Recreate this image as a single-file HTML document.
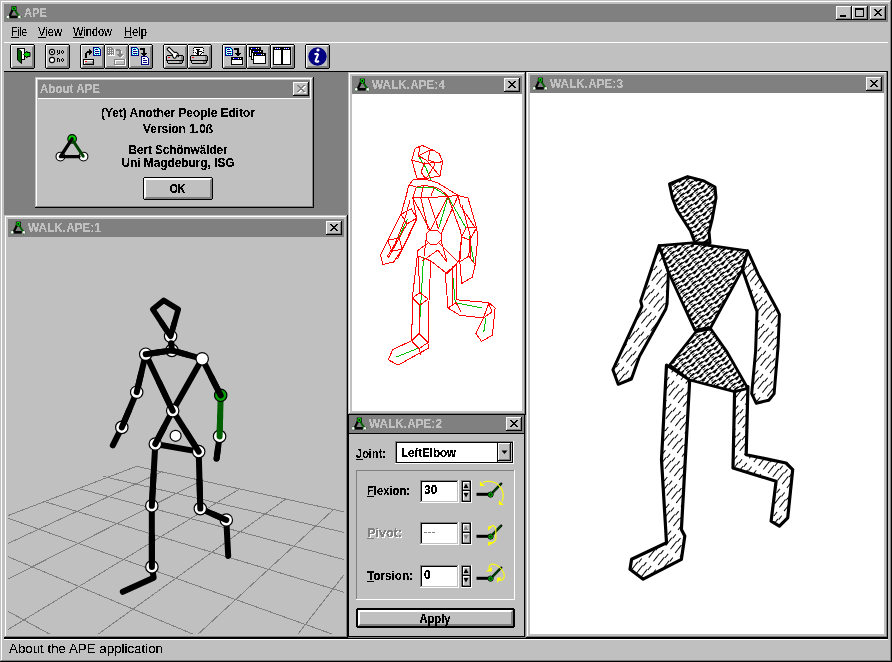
<!DOCTYPE html>
<html><head><meta charset="utf-8"><style>
html,body{margin:0;padding:0;width:892px;height:662px;overflow:hidden;background:#c0c0c0}
svg{display:block}
</style></head><body>
<svg width="892" height="662" viewBox="0 0 892 662" shape-rendering="crispEdges">
<defs><filter id="crisp" x="-5%" y="-20%" width="110%" height="140%" color-interpolation-filters="sRGB"><feComponentTransfer><feFuncA type="discrete" tableValues="0 0 1 1 1"/></feComponentTransfer></filter><filter id="crisp2" x="-5%" y="-20%" width="110%" height="140%"><feComponentTransfer><feFuncA type="discrete" tableValues="0 0 0 1 1 1 1"/></feComponentTransfer></filter></defs>
<rect x="0" y="0" width="892" height="662" fill="#c0c0c0"/>
<rect x="1" y="1" width="889" height="1" fill="#ffffff"/>
<rect x="1" y="1" width="1" height="659" fill="#ffffff"/>
<rect x="1" y="660" width="890" height="1" fill="#808080"/>
<rect x="890" y="1" width="1" height="660" fill="#808080"/>
<rect x="0" y="661" width="892" height="1" fill="#000000"/>
<rect x="891" y="0" width="1" height="662" fill="#000000"/>
<rect x="4" y="4" width="884" height="18" fill="#808080"/>
<g transform="translate(5.7,5.6) scale(1.0)" shape-rendering="auto"><path d="M7.4 3.2 L3.6 11.2" stroke="#000" stroke-width="2.2" fill="none"/><rect x="3.2" y="10" width="8.6" height="2.6" fill="#000"/><path d="M8.6 3.6 L13.6 11.2" stroke="#006000" stroke-width="1.9" fill="none"/><rect x="5.8" y="0.6" width="5" height="4.6" fill="#000"/><circle cx="8.3" cy="2.9" r="1.5" fill="none" stroke="#00d000" stroke-width="1.2"/><circle cx="2.2" cy="11.3" r="1.6" fill="#fff" stroke="#004000" stroke-width="0.8" stroke-dasharray="1 1"/><circle cx="13.8" cy="11.3" r="1.6" fill="#fff" stroke="#004000" stroke-width="0.8" stroke-dasharray="1 1"/></g>
<text x="24" y="16.5" font-size="12" fill="#c0c0c0" font-family="Liberation Sans" font-weight="bold" textLength="23" lengthAdjust="spacingAndGlyphs" filter="url(#crisp)">APE</text>
<rect x="836" y="6" width="16" height="14" fill="#c0c0c0"/>
<rect x="836" y="6" width="15" height="1" fill="#ffffff"/>
<rect x="836" y="6" width="1" height="13" fill="#ffffff"/>
<rect x="836" y="19" width="16" height="1" fill="#000000"/>
<rect x="851" y="6" width="1" height="14" fill="#000000"/>
<rect x="837" y="18" width="14" height="1" fill="#808080"/>
<rect x="850" y="7" width="1" height="12" fill="#808080"/>
<rect x="852" y="6" width="16" height="14" fill="#c0c0c0"/>
<rect x="852" y="6" width="15" height="1" fill="#ffffff"/>
<rect x="852" y="6" width="1" height="13" fill="#ffffff"/>
<rect x="852" y="19" width="16" height="1" fill="#000000"/>
<rect x="867" y="6" width="1" height="14" fill="#000000"/>
<rect x="853" y="18" width="14" height="1" fill="#808080"/>
<rect x="866" y="7" width="1" height="12" fill="#808080"/>
<rect x="870" y="6" width="16" height="14" fill="#c0c0c0"/>
<rect x="870" y="6" width="15" height="1" fill="#ffffff"/>
<rect x="870" y="6" width="1" height="13" fill="#ffffff"/>
<rect x="870" y="19" width="16" height="1" fill="#000000"/>
<rect x="885" y="6" width="1" height="14" fill="#000000"/>
<rect x="871" y="18" width="14" height="1" fill="#808080"/>
<rect x="884" y="7" width="1" height="12" fill="#808080"/>
<rect x="840" y="15" width="6" height="2" fill="#000000"/>
<rect x="855" y="8" width="9" height="9" fill="#000000"/>
<rect x="856" y="10" width="7" height="6" fill="#c0c0c0"/>
<rect x="870" y="6" width="16" height="14" fill="#c0c0c0"/>
<rect x="870" y="6" width="15" height="1" fill="#ffffff"/>
<rect x="870" y="6" width="1" height="13" fill="#ffffff"/>
<rect x="870" y="19" width="16" height="1" fill="#000000"/>
<rect x="885" y="6" width="1" height="14" fill="#000000"/>
<rect x="871" y="18" width="14" height="1" fill="#808080"/>
<rect x="884" y="7" width="1" height="12" fill="#808080"/>
<rect x="874" y="9" width="1" height="1" fill="#000000"/>
<rect x="875" y="9" width="1" height="1" fill="#000000"/>
<rect x="880" y="9" width="1" height="1" fill="#000000"/>
<rect x="881" y="9" width="1" height="1" fill="#000000"/>
<rect x="875" y="10" width="1" height="1" fill="#000000"/>
<rect x="876" y="10" width="1" height="1" fill="#000000"/>
<rect x="879" y="10" width="1" height="1" fill="#000000"/>
<rect x="880" y="10" width="1" height="1" fill="#000000"/>
<rect x="876" y="11" width="1" height="1" fill="#000000"/>
<rect x="877" y="11" width="1" height="1" fill="#000000"/>
<rect x="878" y="11" width="1" height="1" fill="#000000"/>
<rect x="879" y="11" width="1" height="1" fill="#000000"/>
<rect x="877" y="12" width="1" height="1" fill="#000000"/>
<rect x="878" y="12" width="1" height="1" fill="#000000"/>
<rect x="876" y="13" width="1" height="1" fill="#000000"/>
<rect x="877" y="13" width="1" height="1" fill="#000000"/>
<rect x="878" y="13" width="1" height="1" fill="#000000"/>
<rect x="879" y="13" width="1" height="1" fill="#000000"/>
<rect x="875" y="14" width="1" height="1" fill="#000000"/>
<rect x="876" y="14" width="1" height="1" fill="#000000"/>
<rect x="879" y="14" width="1" height="1" fill="#000000"/>
<rect x="880" y="14" width="1" height="1" fill="#000000"/>
<rect x="874" y="15" width="1" height="1" fill="#000000"/>
<rect x="875" y="15" width="1" height="1" fill="#000000"/>
<rect x="880" y="15" width="1" height="1" fill="#000000"/>
<rect x="881" y="15" width="1" height="1" fill="#000000"/>
<text x="11" y="35.5" font-size="12" fill="#000000" font-family="Liberation Sans" textLength="16" lengthAdjust="spacingAndGlyphs" filter="url(#crisp2)">File</text>
<rect x="11" y="37" width="8" height="1" fill="#000000"/>
<text x="38" y="35.5" font-size="12" fill="#000000" font-family="Liberation Sans" textLength="24" lengthAdjust="spacingAndGlyphs" filter="url(#crisp2)">View</text>
<rect x="38" y="37" width="8" height="1" fill="#000000"/>
<text x="73" y="35.5" font-size="12" fill="#000000" font-family="Liberation Sans" textLength="39" lengthAdjust="spacingAndGlyphs" filter="url(#crisp2)">Window</text>
<rect x="73" y="37" width="11" height="1" fill="#000000"/>
<text x="124" y="35.5" font-size="12" fill="#000000" font-family="Liberation Sans" textLength="23" lengthAdjust="spacingAndGlyphs" filter="url(#crisp2)">Help</text>
<rect x="124" y="37" width="8" height="1" fill="#000000"/>
<rect x="4" y="42" width="884" height="1" fill="#ffffff"/>
<rect x="10" y="44" width="25" height="25" fill="#c0c0c0"/>
<rect x="11" y="44" width="23" height="1" fill="#000000"/>
<rect x="11" y="68" width="23" height="1" fill="#000000"/>
<rect x="10" y="45" width="1" height="23" fill="#000000"/>
<rect x="34" y="45" width="1" height="23" fill="#000000"/>
<rect x="11" y="45" width="22" height="1" fill="#ffffff"/>
<rect x="11" y="45" width="1" height="22" fill="#ffffff"/>
<rect x="12" y="67" width="22" height="1" fill="#808080"/>
<rect x="13" y="66" width="21" height="1" fill="#808080"/>
<rect x="33" y="46" width="1" height="22" fill="#808080"/>
<rect x="32" y="47" width="1" height="21" fill="#808080"/>
<rect x="45" y="44" width="25" height="25" fill="#c0c0c0"/>
<rect x="46" y="44" width="23" height="1" fill="#000000"/>
<rect x="46" y="68" width="23" height="1" fill="#000000"/>
<rect x="45" y="45" width="1" height="23" fill="#000000"/>
<rect x="69" y="45" width="1" height="23" fill="#000000"/>
<rect x="46" y="45" width="22" height="1" fill="#ffffff"/>
<rect x="46" y="45" width="1" height="22" fill="#ffffff"/>
<rect x="47" y="67" width="22" height="1" fill="#808080"/>
<rect x="48" y="66" width="21" height="1" fill="#808080"/>
<rect x="68" y="46" width="1" height="22" fill="#808080"/>
<rect x="67" y="47" width="1" height="21" fill="#808080"/>
<rect x="80" y="44" width="25" height="25" fill="#c0c0c0"/>
<rect x="81" y="44" width="23" height="1" fill="#000000"/>
<rect x="81" y="68" width="23" height="1" fill="#000000"/>
<rect x="80" y="45" width="1" height="23" fill="#000000"/>
<rect x="104" y="45" width="1" height="23" fill="#000000"/>
<rect x="81" y="45" width="22" height="1" fill="#ffffff"/>
<rect x="81" y="45" width="1" height="22" fill="#ffffff"/>
<rect x="82" y="67" width="22" height="1" fill="#808080"/>
<rect x="83" y="66" width="21" height="1" fill="#808080"/>
<rect x="103" y="46" width="1" height="22" fill="#808080"/>
<rect x="102" y="47" width="1" height="21" fill="#808080"/>
<rect x="104" y="44" width="25" height="25" fill="#c0c0c0"/>
<rect x="105" y="44" width="23" height="1" fill="#000000"/>
<rect x="105" y="68" width="23" height="1" fill="#000000"/>
<rect x="104" y="45" width="1" height="23" fill="#000000"/>
<rect x="128" y="45" width="1" height="23" fill="#000000"/>
<rect x="105" y="45" width="22" height="1" fill="#ffffff"/>
<rect x="105" y="45" width="1" height="22" fill="#ffffff"/>
<rect x="106" y="67" width="22" height="1" fill="#808080"/>
<rect x="107" y="66" width="21" height="1" fill="#808080"/>
<rect x="127" y="46" width="1" height="22" fill="#808080"/>
<rect x="126" y="47" width="1" height="21" fill="#808080"/>
<rect x="128" y="44" width="25" height="25" fill="#c0c0c0"/>
<rect x="129" y="44" width="23" height="1" fill="#000000"/>
<rect x="129" y="68" width="23" height="1" fill="#000000"/>
<rect x="128" y="45" width="1" height="23" fill="#000000"/>
<rect x="152" y="45" width="1" height="23" fill="#000000"/>
<rect x="129" y="45" width="22" height="1" fill="#ffffff"/>
<rect x="129" y="45" width="1" height="22" fill="#ffffff"/>
<rect x="130" y="67" width="22" height="1" fill="#808080"/>
<rect x="131" y="66" width="21" height="1" fill="#808080"/>
<rect x="151" y="46" width="1" height="22" fill="#808080"/>
<rect x="150" y="47" width="1" height="21" fill="#808080"/>
<rect x="163" y="44" width="25" height="25" fill="#c0c0c0"/>
<rect x="164" y="44" width="23" height="1" fill="#000000"/>
<rect x="164" y="68" width="23" height="1" fill="#000000"/>
<rect x="163" y="45" width="1" height="23" fill="#000000"/>
<rect x="187" y="45" width="1" height="23" fill="#000000"/>
<rect x="164" y="45" width="22" height="1" fill="#ffffff"/>
<rect x="164" y="45" width="1" height="22" fill="#ffffff"/>
<rect x="165" y="67" width="22" height="1" fill="#808080"/>
<rect x="166" y="66" width="21" height="1" fill="#808080"/>
<rect x="186" y="46" width="1" height="22" fill="#808080"/>
<rect x="185" y="47" width="1" height="21" fill="#808080"/>
<rect x="187" y="44" width="25" height="25" fill="#c0c0c0"/>
<rect x="188" y="44" width="23" height="1" fill="#000000"/>
<rect x="188" y="68" width="23" height="1" fill="#000000"/>
<rect x="187" y="45" width="1" height="23" fill="#000000"/>
<rect x="211" y="45" width="1" height="23" fill="#000000"/>
<rect x="188" y="45" width="22" height="1" fill="#ffffff"/>
<rect x="188" y="45" width="1" height="22" fill="#ffffff"/>
<rect x="189" y="67" width="22" height="1" fill="#808080"/>
<rect x="190" y="66" width="21" height="1" fill="#808080"/>
<rect x="210" y="46" width="1" height="22" fill="#808080"/>
<rect x="209" y="47" width="1" height="21" fill="#808080"/>
<rect x="222" y="44" width="25" height="25" fill="#c0c0c0"/>
<rect x="223" y="44" width="23" height="1" fill="#000000"/>
<rect x="223" y="68" width="23" height="1" fill="#000000"/>
<rect x="222" y="45" width="1" height="23" fill="#000000"/>
<rect x="246" y="45" width="1" height="23" fill="#000000"/>
<rect x="223" y="45" width="22" height="1" fill="#ffffff"/>
<rect x="223" y="45" width="1" height="22" fill="#ffffff"/>
<rect x="224" y="67" width="22" height="1" fill="#808080"/>
<rect x="225" y="66" width="21" height="1" fill="#808080"/>
<rect x="245" y="46" width="1" height="22" fill="#808080"/>
<rect x="244" y="47" width="1" height="21" fill="#808080"/>
<rect x="246" y="44" width="25" height="25" fill="#c0c0c0"/>
<rect x="247" y="44" width="23" height="1" fill="#000000"/>
<rect x="247" y="68" width="23" height="1" fill="#000000"/>
<rect x="246" y="45" width="1" height="23" fill="#000000"/>
<rect x="270" y="45" width="1" height="23" fill="#000000"/>
<rect x="247" y="45" width="22" height="1" fill="#ffffff"/>
<rect x="247" y="45" width="1" height="22" fill="#ffffff"/>
<rect x="248" y="67" width="22" height="1" fill="#808080"/>
<rect x="249" y="66" width="21" height="1" fill="#808080"/>
<rect x="269" y="46" width="1" height="22" fill="#808080"/>
<rect x="268" y="47" width="1" height="21" fill="#808080"/>
<rect x="270" y="44" width="25" height="25" fill="#c0c0c0"/>
<rect x="271" y="44" width="23" height="1" fill="#000000"/>
<rect x="271" y="68" width="23" height="1" fill="#000000"/>
<rect x="270" y="45" width="1" height="23" fill="#000000"/>
<rect x="294" y="45" width="1" height="23" fill="#000000"/>
<rect x="271" y="45" width="22" height="1" fill="#ffffff"/>
<rect x="271" y="45" width="1" height="22" fill="#ffffff"/>
<rect x="272" y="67" width="22" height="1" fill="#808080"/>
<rect x="273" y="66" width="21" height="1" fill="#808080"/>
<rect x="293" y="46" width="1" height="22" fill="#808080"/>
<rect x="292" y="47" width="1" height="21" fill="#808080"/>
<rect x="305" y="44" width="25" height="25" fill="#c0c0c0"/>
<rect x="306" y="44" width="23" height="1" fill="#000000"/>
<rect x="306" y="68" width="23" height="1" fill="#000000"/>
<rect x="305" y="45" width="1" height="23" fill="#000000"/>
<rect x="329" y="45" width="1" height="23" fill="#000000"/>
<rect x="306" y="45" width="22" height="1" fill="#ffffff"/>
<rect x="306" y="45" width="1" height="22" fill="#ffffff"/>
<rect x="307" y="67" width="22" height="1" fill="#808080"/>
<rect x="308" y="66" width="21" height="1" fill="#808080"/>
<rect x="328" y="46" width="1" height="22" fill="#808080"/>
<rect x="327" y="47" width="1" height="21" fill="#808080"/>
<rect x="104" y="45" width="1" height="23" fill="#000000"/>
<rect x="128" y="45" width="1" height="23" fill="#000000"/>
<rect x="187" y="45" width="1" height="23" fill="#000000"/>
<rect x="246" y="45" width="1" height="23" fill="#000000"/>
<rect x="270" y="45" width="1" height="23" fill="#000000"/>
<g transform="translate(10,44)" shape-rendering="crispEdges"><rect x="7" y="4" width="8" height="12" fill="#000"/><rect x="8" y="5" width="6" height="10" fill="#fff"/></g>
<g transform="translate(10,44)" shape-rendering="auto"><polygon points="7.5,4.5 11.5,7.5 11.5,19.5 7.5,16" fill="#006000" stroke="#000" stroke-width="1"/><polygon points="13.5,10.5 17,7 17,8.5 20,8.5 20,12.5 17,12.5 17,14" fill="#00d000" stroke="#000" stroke-width="1"/></g>
<g transform="translate(45,44)" shape-rendering="auto"><circle cx="7" cy="8" r="2.6" fill="#fff" stroke="#000" stroke-width="1.1"/><circle cx="7" cy="8" r="1.1" fill="#000"/><circle cx="7" cy="16" r="2.6" fill="#fff" stroke="#000" stroke-width="1.1"/></g>
<rect x="57" y="50" width="1" height="3" fill="#000000"/>
<rect x="59" y="50" width="1" height="4" fill="#000000"/>
<rect x="58" y="53" width="1" height="1" fill="#000000"/>
<rect x="57" y="54" width="1" height="1" fill="#000000"/>
<rect x="62" y="50" width="1" height="1" fill="#000000"/>
<rect x="61" y="51" width="1" height="2" fill="#000000"/>
<rect x="63" y="51" width="1" height="2" fill="#000000"/>
<rect x="62" y="53" width="1" height="1" fill="#000000"/>
<rect x="57" y="58" width="2" height="1" fill="#000000"/>
<rect x="57" y="58" width="1" height="4" fill="#000000"/>
<rect x="59" y="59" width="1" height="3" fill="#000000"/>
<rect x="62" y="58" width="1" height="1" fill="#000000"/>
<rect x="61" y="59" width="1" height="2" fill="#000000"/>
<rect x="63" y="59" width="1" height="2" fill="#000000"/>
<rect x="62" y="61" width="1" height="1" fill="#000000"/>
<rect x="93" y="47" width="1" height="1" fill="#000080"/>
<rect x="94" y="47" width="1" height="1" fill="#000080"/>
<rect x="95" y="47" width="1" height="1" fill="#000080"/>
<rect x="96" y="47" width="1" height="1" fill="#000080"/>
<rect x="97" y="47" width="1" height="1" fill="#000080"/>
<rect x="98" y="47" width="1" height="1" fill="#000080"/>
<rect x="93" y="48" width="1" height="1" fill="#000080"/>
<rect x="94" y="48" width="1" height="1" fill="#00ffff"/>
<rect x="95" y="48" width="1" height="1" fill="#ffffff"/>
<rect x="96" y="48" width="1" height="1" fill="#00ffff"/>
<rect x="97" y="48" width="1" height="1" fill="#ffffff"/>
<rect x="98" y="48" width="1" height="1" fill="#00ffff"/>
<rect x="99" y="48" width="1" height="1" fill="#000080"/>
<rect x="93" y="49" width="1" height="1" fill="#000080"/>
<rect x="94" y="49" width="1" height="1" fill="#ffffff"/>
<rect x="95" y="49" width="1" height="1" fill="#ffffff"/>
<rect x="96" y="49" width="1" height="1" fill="#ffffff"/>
<rect x="97" y="49" width="1" height="1" fill="#ffffff"/>
<rect x="98" y="49" width="1" height="1" fill="#ffffff"/>
<rect x="99" y="49" width="1" height="1" fill="#00ffff"/>
<rect x="100" y="49" width="1" height="1" fill="#000080"/>
<rect x="93" y="50" width="1" height="1" fill="#000080"/>
<rect x="94" y="50" width="1" height="1" fill="#00ffff"/>
<rect x="95" y="50" width="1" height="1" fill="#ffffff"/>
<rect x="96" y="50" width="1" height="1" fill="#ffffff"/>
<rect x="97" y="50" width="1" height="1" fill="#ffffff"/>
<rect x="98" y="50" width="1" height="1" fill="#ffffff"/>
<rect x="99" y="50" width="1" height="1" fill="#ffffff"/>
<rect x="100" y="50" width="1" height="1" fill="#000080"/>
<rect x="93" y="51" width="1" height="1" fill="#000080"/>
<rect x="94" y="51" width="1" height="1" fill="#ffffff"/>
<rect x="95" y="51" width="1" height="1" fill="#ffffff"/>
<rect x="96" y="51" width="1" height="1" fill="#ffffff"/>
<rect x="97" y="51" width="1" height="1" fill="#ffffff"/>
<rect x="98" y="51" width="1" height="1" fill="#ffffff"/>
<rect x="99" y="51" width="1" height="1" fill="#00ffff"/>
<rect x="100" y="51" width="1" height="1" fill="#000080"/>
<rect x="93" y="52" width="1" height="1" fill="#000080"/>
<rect x="94" y="52" width="1" height="1" fill="#00ffff"/>
<rect x="95" y="52" width="1" height="1" fill="#ffffff"/>
<rect x="96" y="52" width="1" height="1" fill="#ffffff"/>
<rect x="97" y="52" width="1" height="1" fill="#ffffff"/>
<rect x="98" y="52" width="1" height="1" fill="#ffffff"/>
<rect x="99" y="52" width="1" height="1" fill="#ffffff"/>
<rect x="100" y="52" width="1" height="1" fill="#000080"/>
<rect x="93" y="53" width="1" height="1" fill="#000080"/>
<rect x="94" y="53" width="1" height="1" fill="#ffffff"/>
<rect x="95" y="53" width="1" height="1" fill="#ffffff"/>
<rect x="96" y="53" width="1" height="1" fill="#ffffff"/>
<rect x="97" y="53" width="1" height="1" fill="#ffffff"/>
<rect x="98" y="53" width="1" height="1" fill="#ffffff"/>
<rect x="99" y="53" width="1" height="1" fill="#00ffff"/>
<rect x="100" y="53" width="1" height="1" fill="#000080"/>
<rect x="93" y="54" width="1" height="1" fill="#000080"/>
<rect x="94" y="54" width="1" height="1" fill="#00ffff"/>
<rect x="95" y="54" width="1" height="1" fill="#ffffff"/>
<rect x="96" y="54" width="1" height="1" fill="#00ffff"/>
<rect x="97" y="54" width="1" height="1" fill="#ffffff"/>
<rect x="98" y="54" width="1" height="1" fill="#00ffff"/>
<rect x="99" y="54" width="1" height="1" fill="#ffffff"/>
<rect x="100" y="54" width="1" height="1" fill="#000080"/>
<rect x="93" y="55" width="1" height="1" fill="#000080"/>
<rect x="94" y="55" width="1" height="1" fill="#000080"/>
<rect x="95" y="55" width="1" height="1" fill="#000080"/>
<rect x="96" y="55" width="1" height="1" fill="#000080"/>
<rect x="97" y="55" width="1" height="1" fill="#000080"/>
<rect x="98" y="55" width="1" height="1" fill="#000080"/>
<rect x="99" y="55" width="1" height="1" fill="#000080"/>
<rect x="100" y="55" width="1" height="1" fill="#000080"/>
<rect x="95" y="49" width="3" height="1" fill="#000080"/>
<rect x="95" y="51" width="4" height="1" fill="#000080"/>
<rect x="95" y="53" width="4" height="1" fill="#000080"/>
<rect x="85" y="53" width="2" height="5" fill="#000000"/>
<rect x="86" y="52" width="1" height="1" fill="#000000"/>
<rect x="87" y="51" width="3" height="2" fill="#000000"/>
<rect x="86" y="53" width="1" height="1" fill="#000000"/>
<rect x="89" y="49" width="1" height="6" fill="#000000"/>
<rect x="90" y="50" width="1" height="4" fill="#000000"/>
<rect x="91" y="51" width="1" height="2" fill="#000000"/>
<rect x="83" y="59" width="11" height="6" fill="#000000"/>
<rect x="84" y="60" width="9" height="4" fill="#c0c0c0"/>
<rect x="84" y="60" width="9" height="1" fill="#ffffff"/>
<rect x="84" y="60" width="1" height="4" fill="#ffffff"/>
<rect x="85" y="63" width="8" height="1" fill="#808080"/>
<rect x="92" y="61" width="1" height="3" fill="#808080"/>
<rect x="85" y="61" width="2" height="1" fill="#ff0000"/>
<rect x="107" y="47" width="1" height="1" fill="#808080"/>
<rect x="108" y="47" width="1" height="1" fill="#808080"/>
<rect x="109" y="47" width="1" height="1" fill="#808080"/>
<rect x="110" y="47" width="1" height="1" fill="#808080"/>
<rect x="111" y="47" width="1" height="1" fill="#808080"/>
<rect x="107" y="48" width="1" height="1" fill="#808080"/>
<rect x="108" y="48" width="1" height="1" fill="#808080"/>
<rect x="109" y="48" width="1" height="1" fill="#808080"/>
<rect x="110" y="48" width="1" height="1" fill="#808080"/>
<rect x="111" y="48" width="1" height="1" fill="#808080"/>
<rect x="112" y="48" width="1" height="1" fill="#808080"/>
<rect x="107" y="49" width="1" height="1" fill="#808080"/>
<rect x="108" y="49" width="1" height="1" fill="#808080"/>
<rect x="109" y="49" width="1" height="1" fill="#808080"/>
<rect x="110" y="49" width="1" height="1" fill="#808080"/>
<rect x="111" y="49" width="1" height="1" fill="#808080"/>
<rect x="112" y="49" width="1" height="1" fill="#808080"/>
<rect x="113" y="49" width="1" height="1" fill="#808080"/>
<rect x="107" y="50" width="1" height="1" fill="#808080"/>
<rect x="108" y="50" width="1" height="1" fill="#808080"/>
<rect x="109" y="50" width="1" height="1" fill="#808080"/>
<rect x="110" y="50" width="1" height="1" fill="#808080"/>
<rect x="111" y="50" width="1" height="1" fill="#808080"/>
<rect x="112" y="50" width="1" height="1" fill="#808080"/>
<rect x="113" y="50" width="1" height="1" fill="#808080"/>
<rect x="107" y="51" width="1" height="1" fill="#808080"/>
<rect x="108" y="51" width="1" height="1" fill="#808080"/>
<rect x="109" y="51" width="1" height="1" fill="#808080"/>
<rect x="110" y="51" width="1" height="1" fill="#808080"/>
<rect x="111" y="51" width="1" height="1" fill="#808080"/>
<rect x="112" y="51" width="1" height="1" fill="#808080"/>
<rect x="113" y="51" width="1" height="1" fill="#808080"/>
<rect x="107" y="52" width="1" height="1" fill="#808080"/>
<rect x="108" y="52" width="1" height="1" fill="#808080"/>
<rect x="109" y="52" width="1" height="1" fill="#808080"/>
<rect x="110" y="52" width="1" height="1" fill="#808080"/>
<rect x="111" y="52" width="1" height="1" fill="#808080"/>
<rect x="112" y="52" width="1" height="1" fill="#808080"/>
<rect x="113" y="52" width="1" height="1" fill="#808080"/>
<rect x="107" y="53" width="1" height="1" fill="#808080"/>
<rect x="108" y="53" width="1" height="1" fill="#808080"/>
<rect x="109" y="53" width="1" height="1" fill="#808080"/>
<rect x="110" y="53" width="1" height="1" fill="#808080"/>
<rect x="111" y="53" width="1" height="1" fill="#808080"/>
<rect x="112" y="53" width="1" height="1" fill="#808080"/>
<rect x="113" y="53" width="1" height="1" fill="#808080"/>
<rect x="107" y="54" width="1" height="1" fill="#808080"/>
<rect x="108" y="54" width="1" height="1" fill="#808080"/>
<rect x="109" y="54" width="1" height="1" fill="#808080"/>
<rect x="110" y="54" width="1" height="1" fill="#808080"/>
<rect x="111" y="54" width="1" height="1" fill="#808080"/>
<rect x="112" y="54" width="1" height="1" fill="#808080"/>
<rect x="113" y="54" width="1" height="1" fill="#808080"/>
<rect x="108" y="48" width="1" height="1" fill="#ffffff"/>
<rect x="110" y="48" width="1" height="1" fill="#ffffff"/>
<rect x="108" y="50" width="1" height="1" fill="#ffffff"/>
<rect x="110" y="50" width="1" height="1" fill="#ffffff"/>
<rect x="112" y="50" width="1" height="1" fill="#ffffff"/>
<rect x="108" y="52" width="1" height="1" fill="#ffffff"/>
<rect x="110" y="52" width="1" height="1" fill="#ffffff"/>
<rect x="112" y="52" width="1" height="1" fill="#ffffff"/>
<rect x="110" y="54" width="1" height="1" fill="#ffffff"/>
<rect x="112" y="54" width="1" height="1" fill="#ffffff"/>
<rect x="108" y="55" width="7" height="1" fill="#ffffff"/>
<rect x="114" y="49" width="1" height="7" fill="#ffffff"/>
<rect x="116" y="49" width="4" height="2" fill="#808080"/>
<rect x="119" y="50" width="2" height="5" fill="#808080"/>
<rect x="117" y="54" width="6" height="1" fill="#808080"/>
<rect x="118" y="55" width="4" height="1" fill="#808080"/>
<rect x="119" y="56" width="2" height="1" fill="#808080"/>
<rect x="121" y="51" width="1" height="1" fill="#ffffff"/>
<rect x="121" y="52" width="1" height="1" fill="#ffffff"/>
<rect x="123" y="55" width="1" height="1" fill="#ffffff"/>
<rect x="122" y="56" width="1" height="1" fill="#ffffff"/>
<rect x="121" y="57" width="1" height="1" fill="#ffffff"/>
<rect x="114" y="59" width="11" height="6" fill="#808080"/>
<rect x="115" y="60" width="9" height="4" fill="#c0c0c0"/>
<rect x="115" y="60" width="9" height="1" fill="#ffffff"/>
<rect x="115" y="60" width="1" height="4" fill="#ffffff"/>
<rect x="115" y="65" width="11" height="1" fill="#ffffff"/>
<rect x="125" y="59" width="1" height="7" fill="#ffffff"/>
<rect x="131" y="47" width="1" height="1" fill="#000080"/>
<rect x="132" y="47" width="1" height="1" fill="#000080"/>
<rect x="133" y="47" width="1" height="1" fill="#000080"/>
<rect x="134" y="47" width="1" height="1" fill="#000080"/>
<rect x="135" y="47" width="1" height="1" fill="#000080"/>
<rect x="136" y="47" width="1" height="1" fill="#000080"/>
<rect x="131" y="48" width="1" height="1" fill="#000080"/>
<rect x="132" y="48" width="1" height="1" fill="#00ffff"/>
<rect x="133" y="48" width="1" height="1" fill="#ffffff"/>
<rect x="134" y="48" width="1" height="1" fill="#00ffff"/>
<rect x="135" y="48" width="1" height="1" fill="#ffffff"/>
<rect x="136" y="48" width="1" height="1" fill="#00ffff"/>
<rect x="137" y="48" width="1" height="1" fill="#000080"/>
<rect x="131" y="49" width="1" height="1" fill="#000080"/>
<rect x="132" y="49" width="1" height="1" fill="#ffffff"/>
<rect x="133" y="49" width="1" height="1" fill="#ffffff"/>
<rect x="134" y="49" width="1" height="1" fill="#ffffff"/>
<rect x="135" y="49" width="1" height="1" fill="#ffffff"/>
<rect x="136" y="49" width="1" height="1" fill="#ffffff"/>
<rect x="137" y="49" width="1" height="1" fill="#00ffff"/>
<rect x="138" y="49" width="1" height="1" fill="#000080"/>
<rect x="131" y="50" width="1" height="1" fill="#000080"/>
<rect x="132" y="50" width="1" height="1" fill="#00ffff"/>
<rect x="133" y="50" width="1" height="1" fill="#ffffff"/>
<rect x="134" y="50" width="1" height="1" fill="#ffffff"/>
<rect x="135" y="50" width="1" height="1" fill="#ffffff"/>
<rect x="136" y="50" width="1" height="1" fill="#ffffff"/>
<rect x="137" y="50" width="1" height="1" fill="#ffffff"/>
<rect x="138" y="50" width="1" height="1" fill="#000080"/>
<rect x="131" y="51" width="1" height="1" fill="#000080"/>
<rect x="132" y="51" width="1" height="1" fill="#ffffff"/>
<rect x="133" y="51" width="1" height="1" fill="#ffffff"/>
<rect x="134" y="51" width="1" height="1" fill="#ffffff"/>
<rect x="135" y="51" width="1" height="1" fill="#ffffff"/>
<rect x="136" y="51" width="1" height="1" fill="#ffffff"/>
<rect x="137" y="51" width="1" height="1" fill="#00ffff"/>
<rect x="138" y="51" width="1" height="1" fill="#000080"/>
<rect x="131" y="52" width="1" height="1" fill="#000080"/>
<rect x="132" y="52" width="1" height="1" fill="#00ffff"/>
<rect x="133" y="52" width="1" height="1" fill="#ffffff"/>
<rect x="134" y="52" width="1" height="1" fill="#ffffff"/>
<rect x="135" y="52" width="1" height="1" fill="#ffffff"/>
<rect x="136" y="52" width="1" height="1" fill="#ffffff"/>
<rect x="137" y="52" width="1" height="1" fill="#ffffff"/>
<rect x="138" y="52" width="1" height="1" fill="#000080"/>
<rect x="131" y="53" width="1" height="1" fill="#000080"/>
<rect x="132" y="53" width="1" height="1" fill="#ffffff"/>
<rect x="133" y="53" width="1" height="1" fill="#ffffff"/>
<rect x="134" y="53" width="1" height="1" fill="#ffffff"/>
<rect x="135" y="53" width="1" height="1" fill="#ffffff"/>
<rect x="136" y="53" width="1" height="1" fill="#ffffff"/>
<rect x="137" y="53" width="1" height="1" fill="#00ffff"/>
<rect x="138" y="53" width="1" height="1" fill="#000080"/>
<rect x="131" y="54" width="1" height="1" fill="#000080"/>
<rect x="132" y="54" width="1" height="1" fill="#00ffff"/>
<rect x="133" y="54" width="1" height="1" fill="#ffffff"/>
<rect x="134" y="54" width="1" height="1" fill="#00ffff"/>
<rect x="135" y="54" width="1" height="1" fill="#ffffff"/>
<rect x="136" y="54" width="1" height="1" fill="#00ffff"/>
<rect x="137" y="54" width="1" height="1" fill="#ffffff"/>
<rect x="138" y="54" width="1" height="1" fill="#000080"/>
<rect x="131" y="55" width="1" height="1" fill="#000080"/>
<rect x="132" y="55" width="1" height="1" fill="#000080"/>
<rect x="133" y="55" width="1" height="1" fill="#000080"/>
<rect x="134" y="55" width="1" height="1" fill="#000080"/>
<rect x="135" y="55" width="1" height="1" fill="#000080"/>
<rect x="136" y="55" width="1" height="1" fill="#000080"/>
<rect x="137" y="55" width="1" height="1" fill="#000080"/>
<rect x="138" y="55" width="1" height="1" fill="#000080"/>
<rect x="133" y="49" width="3" height="1" fill="#000080"/>
<rect x="133" y="51" width="4" height="1" fill="#000080"/>
<rect x="133" y="53" width="4" height="1" fill="#000080"/>
<rect x="140" y="48" width="4" height="2" fill="#000000"/>
<rect x="143" y="49" width="2" height="5" fill="#000000"/>
<rect x="144" y="48" width="1" height="1" fill="#000000"/>
<rect x="141" y="53" width="6" height="1" fill="#000000"/>
<rect x="142" y="54" width="4" height="1" fill="#000000"/>
<rect x="143" y="55" width="2" height="1" fill="#000000"/>
<rect x="141" y="56" width="1" height="1" fill="#000080"/>
<rect x="142" y="56" width="1" height="1" fill="#000080"/>
<rect x="143" y="56" width="1" height="1" fill="#000080"/>
<rect x="144" y="56" width="1" height="1" fill="#000080"/>
<rect x="145" y="56" width="1" height="1" fill="#000080"/>
<rect x="146" y="56" width="1" height="1" fill="#000080"/>
<rect x="141" y="57" width="1" height="1" fill="#000080"/>
<rect x="142" y="57" width="1" height="1" fill="#ffffff"/>
<rect x="143" y="57" width="1" height="1" fill="#ffffff"/>
<rect x="144" y="57" width="1" height="1" fill="#ffffff"/>
<rect x="145" y="57" width="1" height="1" fill="#ffffff"/>
<rect x="146" y="57" width="1" height="1" fill="#ffffff"/>
<rect x="147" y="57" width="1" height="1" fill="#000080"/>
<rect x="141" y="58" width="1" height="1" fill="#000080"/>
<rect x="142" y="58" width="1" height="1" fill="#ffffff"/>
<rect x="143" y="58" width="1" height="1" fill="#ffffff"/>
<rect x="144" y="58" width="1" height="1" fill="#ffffff"/>
<rect x="145" y="58" width="1" height="1" fill="#ffffff"/>
<rect x="146" y="58" width="1" height="1" fill="#ffffff"/>
<rect x="147" y="58" width="1" height="1" fill="#ffffff"/>
<rect x="148" y="58" width="1" height="1" fill="#000080"/>
<rect x="141" y="59" width="1" height="1" fill="#000080"/>
<rect x="142" y="59" width="1" height="1" fill="#ffffff"/>
<rect x="143" y="59" width="1" height="1" fill="#ffffff"/>
<rect x="144" y="59" width="1" height="1" fill="#ffffff"/>
<rect x="145" y="59" width="1" height="1" fill="#ffffff"/>
<rect x="146" y="59" width="1" height="1" fill="#ffffff"/>
<rect x="147" y="59" width="1" height="1" fill="#ffffff"/>
<rect x="148" y="59" width="1" height="1" fill="#000080"/>
<rect x="141" y="60" width="1" height="1" fill="#000080"/>
<rect x="142" y="60" width="1" height="1" fill="#ffffff"/>
<rect x="143" y="60" width="1" height="1" fill="#ffffff"/>
<rect x="144" y="60" width="1" height="1" fill="#ffffff"/>
<rect x="145" y="60" width="1" height="1" fill="#ffffff"/>
<rect x="146" y="60" width="1" height="1" fill="#ffffff"/>
<rect x="147" y="60" width="1" height="1" fill="#ffffff"/>
<rect x="148" y="60" width="1" height="1" fill="#000080"/>
<rect x="141" y="61" width="1" height="1" fill="#000080"/>
<rect x="142" y="61" width="1" height="1" fill="#ffffff"/>
<rect x="143" y="61" width="1" height="1" fill="#ffffff"/>
<rect x="144" y="61" width="1" height="1" fill="#ffffff"/>
<rect x="145" y="61" width="1" height="1" fill="#ffffff"/>
<rect x="146" y="61" width="1" height="1" fill="#ffffff"/>
<rect x="147" y="61" width="1" height="1" fill="#ffffff"/>
<rect x="148" y="61" width="1" height="1" fill="#000080"/>
<rect x="141" y="62" width="1" height="1" fill="#000080"/>
<rect x="142" y="62" width="1" height="1" fill="#ffffff"/>
<rect x="143" y="62" width="1" height="1" fill="#ffffff"/>
<rect x="144" y="62" width="1" height="1" fill="#ffffff"/>
<rect x="145" y="62" width="1" height="1" fill="#ffffff"/>
<rect x="146" y="62" width="1" height="1" fill="#ffffff"/>
<rect x="147" y="62" width="1" height="1" fill="#ffffff"/>
<rect x="148" y="62" width="1" height="1" fill="#000080"/>
<rect x="141" y="63" width="1" height="1" fill="#000080"/>
<rect x="142" y="63" width="1" height="1" fill="#ffffff"/>
<rect x="143" y="63" width="1" height="1" fill="#ffffff"/>
<rect x="144" y="63" width="1" height="1" fill="#ffffff"/>
<rect x="145" y="63" width="1" height="1" fill="#ffffff"/>
<rect x="146" y="63" width="1" height="1" fill="#ffffff"/>
<rect x="147" y="63" width="1" height="1" fill="#ffffff"/>
<rect x="148" y="63" width="1" height="1" fill="#000080"/>
<rect x="141" y="64" width="1" height="1" fill="#000080"/>
<rect x="142" y="64" width="1" height="1" fill="#000080"/>
<rect x="143" y="64" width="1" height="1" fill="#000080"/>
<rect x="144" y="64" width="1" height="1" fill="#000080"/>
<rect x="145" y="64" width="1" height="1" fill="#000080"/>
<rect x="146" y="64" width="1" height="1" fill="#000080"/>
<rect x="147" y="64" width="1" height="1" fill="#000080"/>
<rect x="148" y="64" width="1" height="1" fill="#000080"/>
<rect x="143" y="58" width="2" height="1" fill="#000080"/>
<rect x="143" y="60" width="4" height="1" fill="#000080"/>
<rect x="143" y="62" width="4" height="1" fill="#000080"/>
<rect x="167" y="55" width="16" height="1" fill="#000000"/>
<rect x="166" y="56" width="1" height="4" fill="#000000"/>
<rect x="183" y="56" width="1" height="4" fill="#000000"/>
<rect x="167" y="56" width="16" height="4" fill="#c0c0c0"/>
<rect x="168" y="57" width="2" height="1" fill="#ff0000"/>
<rect x="181" y="56" width="2" height="4" fill="#808080"/>
<rect x="166" y="60" width="18" height="1" fill="#000000"/>
<rect x="167" y="61" width="1" height="2" fill="#000000"/>
<rect x="182" y="61" width="1" height="2" fill="#000000"/>
<rect x="168" y="63" width="14" height="1" fill="#000000"/>
<rect x="168" y="61" width="14" height="2" fill="#c0c0c0"/>
<rect x="179" y="61" width="3" height="2" fill="#808080"/>
<g transform="translate(163,44)" shape-rendering="auto"><polygon points="4.2,4.6 6,3.2 11.3,8.4 13.6,8.4 15.2,10 15.4,12.6 14,11.2 12.6,14 11,14.2 9.8,12.6 9.4,10.6 4.2,5.6" fill="#fff" stroke="#000" stroke-width="1.1" stroke-linejoin="round"/></g>
<rect x="191" y="55" width="16" height="1" fill="#000000"/>
<rect x="190" y="56" width="1" height="4" fill="#000000"/>
<rect x="207" y="56" width="1" height="4" fill="#000000"/>
<rect x="191" y="56" width="16" height="4" fill="#c0c0c0"/>
<rect x="192" y="57" width="2" height="1" fill="#ff0000"/>
<rect x="205" y="56" width="2" height="4" fill="#808080"/>
<rect x="190" y="60" width="18" height="1" fill="#000000"/>
<rect x="191" y="61" width="1" height="2" fill="#000000"/>
<rect x="206" y="61" width="1" height="2" fill="#000000"/>
<rect x="192" y="63" width="14" height="1" fill="#000000"/>
<rect x="192" y="61" width="14" height="2" fill="#c0c0c0"/>
<rect x="203" y="61" width="3" height="2" fill="#808080"/>
<rect x="194" y="47" width="9" height="8" fill="#ffffff"/>
<rect x="194" y="47" width="9" height="1" fill="#000000"/>
<rect x="193" y="48" width="1" height="1" fill="#000000"/>
<rect x="203" y="48" width="1" height="1" fill="#000000"/>
<rect x="193" y="50" width="1" height="1" fill="#000000"/>
<rect x="203" y="50" width="1" height="1" fill="#000000"/>
<rect x="193" y="52" width="1" height="1" fill="#000000"/>
<rect x="203" y="52" width="1" height="1" fill="#000000"/>
<rect x="196" y="49" width="4" height="1" fill="#000000"/>
<rect x="197" y="49" width="2" height="6" fill="#000000"/>
<rect x="195" y="52" width="1" height="1" fill="#000000"/>
<rect x="196" y="53" width="1" height="1" fill="#000000"/>
<rect x="199" y="51" width="3" height="1" fill="#000000"/>
<rect x="202" y="52" width="1" height="1" fill="#000000"/>
<rect x="201" y="53" width="1" height="1" fill="#000000"/>
<rect x="200" y="54" width="1" height="1" fill="#000000"/>
<rect x="225" y="47" width="1" height="1" fill="#000080"/>
<rect x="226" y="47" width="1" height="1" fill="#000080"/>
<rect x="227" y="47" width="1" height="1" fill="#000080"/>
<rect x="228" y="47" width="1" height="1" fill="#000080"/>
<rect x="229" y="47" width="1" height="1" fill="#000080"/>
<rect x="230" y="47" width="1" height="1" fill="#000080"/>
<rect x="225" y="48" width="1" height="1" fill="#000080"/>
<rect x="226" y="48" width="1" height="1" fill="#00ffff"/>
<rect x="227" y="48" width="1" height="1" fill="#ffffff"/>
<rect x="228" y="48" width="1" height="1" fill="#00ffff"/>
<rect x="229" y="48" width="1" height="1" fill="#ffffff"/>
<rect x="230" y="48" width="1" height="1" fill="#00ffff"/>
<rect x="231" y="48" width="1" height="1" fill="#000080"/>
<rect x="225" y="49" width="1" height="1" fill="#000080"/>
<rect x="226" y="49" width="1" height="1" fill="#ffffff"/>
<rect x="227" y="49" width="1" height="1" fill="#ffffff"/>
<rect x="228" y="49" width="1" height="1" fill="#ffffff"/>
<rect x="229" y="49" width="1" height="1" fill="#ffffff"/>
<rect x="230" y="49" width="1" height="1" fill="#ffffff"/>
<rect x="231" y="49" width="1" height="1" fill="#00ffff"/>
<rect x="232" y="49" width="1" height="1" fill="#000080"/>
<rect x="225" y="50" width="1" height="1" fill="#000080"/>
<rect x="226" y="50" width="1" height="1" fill="#00ffff"/>
<rect x="227" y="50" width="1" height="1" fill="#ffffff"/>
<rect x="228" y="50" width="1" height="1" fill="#ffffff"/>
<rect x="229" y="50" width="1" height="1" fill="#ffffff"/>
<rect x="230" y="50" width="1" height="1" fill="#ffffff"/>
<rect x="231" y="50" width="1" height="1" fill="#ffffff"/>
<rect x="232" y="50" width="1" height="1" fill="#000080"/>
<rect x="225" y="51" width="1" height="1" fill="#000080"/>
<rect x="226" y="51" width="1" height="1" fill="#ffffff"/>
<rect x="227" y="51" width="1" height="1" fill="#ffffff"/>
<rect x="228" y="51" width="1" height="1" fill="#ffffff"/>
<rect x="229" y="51" width="1" height="1" fill="#ffffff"/>
<rect x="230" y="51" width="1" height="1" fill="#ffffff"/>
<rect x="231" y="51" width="1" height="1" fill="#00ffff"/>
<rect x="232" y="51" width="1" height="1" fill="#000080"/>
<rect x="225" y="52" width="1" height="1" fill="#000080"/>
<rect x="226" y="52" width="1" height="1" fill="#00ffff"/>
<rect x="227" y="52" width="1" height="1" fill="#ffffff"/>
<rect x="228" y="52" width="1" height="1" fill="#ffffff"/>
<rect x="229" y="52" width="1" height="1" fill="#ffffff"/>
<rect x="230" y="52" width="1" height="1" fill="#ffffff"/>
<rect x="231" y="52" width="1" height="1" fill="#ffffff"/>
<rect x="232" y="52" width="1" height="1" fill="#000080"/>
<rect x="225" y="53" width="1" height="1" fill="#000080"/>
<rect x="226" y="53" width="1" height="1" fill="#ffffff"/>
<rect x="227" y="53" width="1" height="1" fill="#ffffff"/>
<rect x="228" y="53" width="1" height="1" fill="#ffffff"/>
<rect x="229" y="53" width="1" height="1" fill="#ffffff"/>
<rect x="230" y="53" width="1" height="1" fill="#ffffff"/>
<rect x="231" y="53" width="1" height="1" fill="#00ffff"/>
<rect x="232" y="53" width="1" height="1" fill="#000080"/>
<rect x="225" y="54" width="1" height="1" fill="#000080"/>
<rect x="226" y="54" width="1" height="1" fill="#00ffff"/>
<rect x="227" y="54" width="1" height="1" fill="#ffffff"/>
<rect x="228" y="54" width="1" height="1" fill="#00ffff"/>
<rect x="229" y="54" width="1" height="1" fill="#ffffff"/>
<rect x="230" y="54" width="1" height="1" fill="#00ffff"/>
<rect x="231" y="54" width="1" height="1" fill="#ffffff"/>
<rect x="232" y="54" width="1" height="1" fill="#000080"/>
<rect x="225" y="55" width="1" height="1" fill="#000080"/>
<rect x="226" y="55" width="1" height="1" fill="#000080"/>
<rect x="227" y="55" width="1" height="1" fill="#000080"/>
<rect x="228" y="55" width="1" height="1" fill="#000080"/>
<rect x="229" y="55" width="1" height="1" fill="#000080"/>
<rect x="230" y="55" width="1" height="1" fill="#000080"/>
<rect x="231" y="55" width="1" height="1" fill="#000080"/>
<rect x="232" y="55" width="1" height="1" fill="#000080"/>
<rect x="227" y="49" width="3" height="1" fill="#000080"/>
<rect x="227" y="51" width="4" height="1" fill="#000080"/>
<rect x="227" y="53" width="4" height="1" fill="#000080"/>
<rect x="234" y="48" width="4" height="2" fill="#000000"/>
<rect x="237" y="49" width="2" height="5" fill="#000000"/>
<rect x="238" y="48" width="1" height="1" fill="#000000"/>
<rect x="235" y="53" width="6" height="1" fill="#000000"/>
<rect x="236" y="54" width="4" height="1" fill="#000000"/>
<rect x="237" y="55" width="2" height="1" fill="#000000"/>
<rect x="231" y="57" width="12" height="8" fill="#000000"/>
<rect x="232" y="60" width="10" height="4" fill="#ffffff"/>
<rect x="232" y="58" width="10" height="2" fill="#000000"/>
<rect x="234" y="58" width="5" height="1" fill="#0000ff"/>
<rect x="233" y="58" width="1" height="1" fill="#ffffff"/>
<rect x="240" y="58" width="1" height="1" fill="#ffffff"/>
<rect x="238" y="58" width="1" height="1" fill="#ffffff"/>
<rect x="249" y="47" width="12" height="10" fill="#000000"/>
<rect x="250" y="50" width="10" height="6" fill="#ffffff"/>
<rect x="250" y="48" width="10" height="2" fill="#000000"/>
<rect x="252" y="48" width="5" height="1" fill="#0000ff"/>
<rect x="251" y="48" width="1" height="1" fill="#ffffff"/>
<rect x="258" y="48" width="1" height="1" fill="#ffffff"/>
<rect x="256" y="48" width="1" height="1" fill="#ffffff"/>
<rect x="251" y="50" width="12" height="10" fill="#000000"/>
<rect x="252" y="53" width="10" height="6" fill="#ffffff"/>
<rect x="252" y="51" width="10" height="2" fill="#000000"/>
<rect x="254" y="51" width="5" height="1" fill="#0000ff"/>
<rect x="253" y="51" width="1" height="1" fill="#ffffff"/>
<rect x="260" y="51" width="1" height="1" fill="#ffffff"/>
<rect x="258" y="51" width="1" height="1" fill="#ffffff"/>
<rect x="253" y="53" width="13" height="11" fill="#000000"/>
<rect x="254" y="56" width="11" height="7" fill="#ffffff"/>
<rect x="254" y="54" width="11" height="2" fill="#000000"/>
<rect x="257" y="54" width="5" height="1" fill="#0000ff"/>
<rect x="255" y="54" width="1" height="1" fill="#ffffff"/>
<rect x="263" y="54" width="1" height="1" fill="#ffffff"/>
<rect x="261" y="54" width="1" height="1" fill="#ffffff"/>
<rect x="273" y="47" width="9" height="18" fill="#000000"/>
<rect x="274" y="50" width="7" height="14" fill="#ffffff"/>
<rect x="274" y="48" width="7" height="2" fill="#000000"/>
<rect x="275" y="48" width="5" height="1" fill="#0000ff"/>
<rect x="275" y="48" width="1" height="1" fill="#ffffff"/>
<rect x="279" y="48" width="1" height="1" fill="#ffffff"/>
<rect x="277" y="48" width="1" height="1" fill="#ffffff"/>
<rect x="282" y="47" width="9" height="18" fill="#000000"/>
<rect x="283" y="50" width="7" height="14" fill="#ffffff"/>
<rect x="283" y="48" width="7" height="2" fill="#000000"/>
<rect x="284" y="48" width="5" height="1" fill="#0000ff"/>
<rect x="284" y="48" width="1" height="1" fill="#ffffff"/>
<rect x="288" y="48" width="1" height="1" fill="#ffffff"/>
<rect x="286" y="48" width="1" height="1" fill="#ffffff"/>
<g shape-rendering="auto"><circle cx="317.5" cy="56.5" r="9.2" fill="#000080"/><circle cx="318" cy="50" r="1.6" fill="#fff"/><path d="M314.5 54.5 Q317 53 318 54.5 L315.5 61 Q316 62.5 319 61" stroke="#fff" stroke-width="2" fill="none"/></g>
<rect x="4" y="71" width="884" height="1" fill="#000000"/>
<rect x="4" y="72" width="884" height="566" fill="#808080"/>
<rect x="4" y="638" width="884" height="1" fill="#000000"/>
<rect x="4" y="639" width="884" height="1" fill="#ffffff"/>
<text x="9" y="652.5" font-size="13" fill="#000000" font-family="Liberation Sans" textLength="154" lengthAdjust="spacingAndGlyphs" filter="url(#crisp2)">About the APE application</text>
<rect x="35" y="77" width="279" height="131" fill="#c0c0c0"/>
<rect x="36" y="78" width="277" height="1" fill="#ffffff"/>
<rect x="36" y="78" width="1" height="129" fill="#ffffff"/>
<rect x="35" y="207" width="279" height="1" fill="#000000"/>
<rect x="313" y="77" width="1" height="131" fill="#000000"/>
<rect x="36" y="206" width="277" height="1" fill="#808080"/>
<rect x="312" y="78" width="1" height="129" fill="#808080"/>
<rect x="38" y="80" width="272" height="18" fill="#808080"/>
<rect x="38" y="98" width="273" height="1" fill="#ffffff"/>
<rect x="310" y="78" width="1" height="21" fill="#ffffff"/>
<text x="40" y="92.5" font-size="12" fill="#c0c0c0" font-family="Liberation Sans" font-weight="bold" textLength="60" lengthAdjust="spacingAndGlyphs" filter="url(#crisp)">About APE</text>
<rect x="293" y="82" width="16" height="14" fill="#c0c0c0"/>
<rect x="293" y="82" width="15" height="1" fill="#ffffff"/>
<rect x="293" y="82" width="1" height="13" fill="#ffffff"/>
<rect x="293" y="95" width="16" height="1" fill="#000000"/>
<rect x="308" y="82" width="1" height="14" fill="#000000"/>
<rect x="294" y="94" width="14" height="1" fill="#808080"/>
<rect x="307" y="83" width="1" height="12" fill="#808080"/>
<rect x="298" y="86" width="1" height="1" fill="#ffffff"/>
<rect x="299" y="86" width="1" height="1" fill="#ffffff"/>
<rect x="304" y="86" width="1" height="1" fill="#ffffff"/>
<rect x="305" y="86" width="1" height="1" fill="#ffffff"/>
<rect x="299" y="87" width="1" height="1" fill="#ffffff"/>
<rect x="300" y="87" width="1" height="1" fill="#ffffff"/>
<rect x="303" y="87" width="1" height="1" fill="#ffffff"/>
<rect x="304" y="87" width="1" height="1" fill="#ffffff"/>
<rect x="300" y="88" width="1" height="1" fill="#ffffff"/>
<rect x="301" y="88" width="1" height="1" fill="#ffffff"/>
<rect x="302" y="88" width="1" height="1" fill="#ffffff"/>
<rect x="303" y="88" width="1" height="1" fill="#ffffff"/>
<rect x="301" y="89" width="1" height="1" fill="#ffffff"/>
<rect x="302" y="89" width="1" height="1" fill="#ffffff"/>
<rect x="300" y="90" width="1" height="1" fill="#ffffff"/>
<rect x="301" y="90" width="1" height="1" fill="#ffffff"/>
<rect x="302" y="90" width="1" height="1" fill="#ffffff"/>
<rect x="303" y="90" width="1" height="1" fill="#ffffff"/>
<rect x="299" y="91" width="1" height="1" fill="#ffffff"/>
<rect x="300" y="91" width="1" height="1" fill="#ffffff"/>
<rect x="303" y="91" width="1" height="1" fill="#ffffff"/>
<rect x="304" y="91" width="1" height="1" fill="#ffffff"/>
<rect x="298" y="92" width="1" height="1" fill="#ffffff"/>
<rect x="299" y="92" width="1" height="1" fill="#ffffff"/>
<rect x="304" y="92" width="1" height="1" fill="#ffffff"/>
<rect x="305" y="92" width="1" height="1" fill="#ffffff"/>
<rect x="297" y="85" width="1" height="1" fill="#808080"/>
<rect x="298" y="85" width="1" height="1" fill="#808080"/>
<rect x="303" y="85" width="1" height="1" fill="#808080"/>
<rect x="304" y="85" width="1" height="1" fill="#808080"/>
<rect x="298" y="86" width="1" height="1" fill="#808080"/>
<rect x="299" y="86" width="1" height="1" fill="#808080"/>
<rect x="302" y="86" width="1" height="1" fill="#808080"/>
<rect x="303" y="86" width="1" height="1" fill="#808080"/>
<rect x="299" y="87" width="1" height="1" fill="#808080"/>
<rect x="300" y="87" width="1" height="1" fill="#808080"/>
<rect x="301" y="87" width="1" height="1" fill="#808080"/>
<rect x="302" y="87" width="1" height="1" fill="#808080"/>
<rect x="300" y="88" width="1" height="1" fill="#808080"/>
<rect x="301" y="88" width="1" height="1" fill="#808080"/>
<rect x="299" y="89" width="1" height="1" fill="#808080"/>
<rect x="300" y="89" width="1" height="1" fill="#808080"/>
<rect x="301" y="89" width="1" height="1" fill="#808080"/>
<rect x="302" y="89" width="1" height="1" fill="#808080"/>
<rect x="298" y="90" width="1" height="1" fill="#808080"/>
<rect x="299" y="90" width="1" height="1" fill="#808080"/>
<rect x="302" y="90" width="1" height="1" fill="#808080"/>
<rect x="303" y="90" width="1" height="1" fill="#808080"/>
<rect x="297" y="91" width="1" height="1" fill="#808080"/>
<rect x="298" y="91" width="1" height="1" fill="#808080"/>
<rect x="303" y="91" width="1" height="1" fill="#808080"/>
<rect x="304" y="91" width="1" height="1" fill="#808080"/>
<g shape-rendering="auto"><circle cx="60.4" cy="156.6" r="4.4" fill="#fff" stroke="#000" stroke-width="1.1"/><circle cx="83.5" cy="156.6" r="4.4" fill="#fff" stroke="#000" stroke-width="1.1"/><circle cx="72.1" cy="138.9" r="4.3" fill="#00d000" stroke="#000" stroke-width="1.1"/><path d="M72.1 138.9 L60.4 156.6 H79" stroke="#000" stroke-width="3.4" fill="none" stroke-linecap="round" stroke-linejoin="round"/><path d="M73.5 141.5 L83.2 156.2" stroke="#004000" stroke-width="3" fill="none" stroke-linecap="round"/></g>
<text x="178" y="117" font-size="12" fill="#000000" font-family="Liberation Sans" font-weight="bold" textLength="154" lengthAdjust="spacingAndGlyphs" text-anchor="middle" filter="url(#crisp)">(Yet) Another People Editor</text>
<text x="178" y="133" font-size="12" fill="#000000" font-family="Liberation Sans" font-weight="bold" textLength="70" lengthAdjust="spacingAndGlyphs" text-anchor="middle" filter="url(#crisp)">Version 1.0ß</text>
<text x="178" y="154" font-size="12" fill="#000000" font-family="Liberation Sans" font-weight="bold" textLength="99" lengthAdjust="spacingAndGlyphs" text-anchor="middle" filter="url(#crisp)">Bert Schönwälder</text>
<text x="178" y="167" font-size="12" fill="#000000" font-family="Liberation Sans" font-weight="bold" textLength="113" lengthAdjust="spacingAndGlyphs" text-anchor="middle" filter="url(#crisp)">Uni Magdeburg, ISG</text>
<rect x="143" y="177" width="70" height="23" fill="#000000"/>
<rect x="144" y="178" width="68" height="21" fill="#c0c0c0"/>
<rect x="144" y="178" width="67" height="1" fill="#ffffff"/>
<rect x="144" y="179" width="66" height="1" fill="#ffffff"/>
<rect x="144" y="178" width="1" height="20" fill="#ffffff"/>
<rect x="145" y="178" width="1" height="19" fill="#ffffff"/>
<rect x="145" y="198" width="67" height="1" fill="#808080"/>
<rect x="146" y="197" width="66" height="1" fill="#808080"/>
<rect x="211" y="179" width="1" height="20" fill="#808080"/>
<rect x="210" y="180" width="1" height="19" fill="#808080"/>
<rect x="143" y="177" width="1" height="1" fill="#c0c0c0"/>
<rect x="212" y="177" width="1" height="1" fill="#c0c0c0"/>
<rect x="143" y="199" width="1" height="1" fill="#c0c0c0"/>
<rect x="212" y="199" width="1" height="1" fill="#c0c0c0"/>
<text x="177.5" y="192.5" font-size="12" fill="#000000" font-family="Liberation Sans" font-weight="bold" textLength="16" lengthAdjust="spacingAndGlyphs" text-anchor="middle" filter="url(#crisp)">OK</text>
<rect x="4" y="215" width="344" height="423" fill="#c0c0c0"/>
<rect x="5" y="216" width="341" height="1" fill="#ffffff"/>
<rect x="5" y="216" width="1" height="420" fill="#ffffff"/>
<rect x="4" y="637" width="344" height="1" fill="#000000"/>
<rect x="347" y="215" width="1" height="423" fill="#000000"/>
<rect x="5" y="636" width="342" height="1" fill="#808080"/>
<rect x="346" y="216" width="1" height="421" fill="#808080"/>
<rect x="8" y="219" width="336" height="18" fill="#808080"/>
<g transform="translate(10,221) scale(1.0)" shape-rendering="auto"><path d="M7.4 3.2 L3.6 11.2" stroke="#000" stroke-width="2.2" fill="none"/><rect x="3.2" y="10" width="8.6" height="2.6" fill="#000"/><path d="M8.6 3.6 L13.6 11.2" stroke="#006000" stroke-width="1.9" fill="none"/><rect x="5.8" y="0.6" width="5" height="4.6" fill="#000"/><circle cx="8.3" cy="2.9" r="1.5" fill="none" stroke="#00d000" stroke-width="1.2"/><circle cx="2.2" cy="11.3" r="1.6" fill="#fff" stroke="#004000" stroke-width="0.8" stroke-dasharray="1 1"/><circle cx="13.8" cy="11.3" r="1.6" fill="#fff" stroke="#004000" stroke-width="0.8" stroke-dasharray="1 1"/></g>
<text x="28" y="231.5" font-size="12" fill="#c0c0c0" font-family="Liberation Sans" font-weight="bold" textLength="73" lengthAdjust="spacingAndGlyphs" filter="url(#crisp)">WALK.APE:1</text>
<rect x="326" y="221" width="16" height="14" fill="#c0c0c0"/>
<rect x="326" y="221" width="15" height="1" fill="#ffffff"/>
<rect x="326" y="221" width="1" height="13" fill="#ffffff"/>
<rect x="326" y="234" width="16" height="1" fill="#000000"/>
<rect x="341" y="221" width="1" height="14" fill="#000000"/>
<rect x="327" y="233" width="14" height="1" fill="#808080"/>
<rect x="340" y="222" width="1" height="12" fill="#808080"/>
<rect x="330" y="224" width="1" height="1" fill="#000000"/>
<rect x="331" y="224" width="1" height="1" fill="#000000"/>
<rect x="336" y="224" width="1" height="1" fill="#000000"/>
<rect x="337" y="224" width="1" height="1" fill="#000000"/>
<rect x="331" y="225" width="1" height="1" fill="#000000"/>
<rect x="332" y="225" width="1" height="1" fill="#000000"/>
<rect x="335" y="225" width="1" height="1" fill="#000000"/>
<rect x="336" y="225" width="1" height="1" fill="#000000"/>
<rect x="332" y="226" width="1" height="1" fill="#000000"/>
<rect x="333" y="226" width="1" height="1" fill="#000000"/>
<rect x="334" y="226" width="1" height="1" fill="#000000"/>
<rect x="335" y="226" width="1" height="1" fill="#000000"/>
<rect x="333" y="227" width="1" height="1" fill="#000000"/>
<rect x="334" y="227" width="1" height="1" fill="#000000"/>
<rect x="332" y="228" width="1" height="1" fill="#000000"/>
<rect x="333" y="228" width="1" height="1" fill="#000000"/>
<rect x="334" y="228" width="1" height="1" fill="#000000"/>
<rect x="335" y="228" width="1" height="1" fill="#000000"/>
<rect x="331" y="229" width="1" height="1" fill="#000000"/>
<rect x="332" y="229" width="1" height="1" fill="#000000"/>
<rect x="335" y="229" width="1" height="1" fill="#000000"/>
<rect x="336" y="229" width="1" height="1" fill="#000000"/>
<rect x="330" y="230" width="1" height="1" fill="#000000"/>
<rect x="331" y="230" width="1" height="1" fill="#000000"/>
<rect x="336" y="230" width="1" height="1" fill="#000000"/>
<rect x="337" y="230" width="1" height="1" fill="#000000"/>
<rect x="8" y="237" width="336" height="397" fill="#c0c0c0"/>
<svg x="8" y="237" width="336" height="397" viewBox="8 237 336 397" overflow="hidden">
<g stroke="#808080" stroke-width="1" fill="none" shape-rendering="crispEdges">
<line x1="136.5" y1="466.3" x2="344" y2="511.8"/>
<line x1="102.6" y1="476.3" x2="344" y2="532.4"/>
<line x1="78.5" y1="488.5" x2="344" y2="559.6"/>
<line x1="44.5" y1="501.6" x2="344" y2="592.2"/>
<line x1="8" y1="518.2" x2="332" y2="634"/>
<line x1="8" y1="556.7" x2="192.6" y2="634"/>
<line x1="8" y1="611.3" x2="49.4" y2="634"/>
<line x1="136.5" y1="466.3" x2="8" y2="515.6"/>
<line x1="161.8" y1="471.8" x2="8" y2="543.5"/>
<line x1="201.7" y1="480.6" x2="8" y2="579"/>
<line x1="239.5" y1="488.9" x2="8" y2="629.6"/>
<line x1="286.4" y1="498.6" x2="98.4" y2="634"/>
<line x1="333.5" y1="509.6" x2="198.2" y2="634"/>
<line x1="344" y1="574.8" x2="298" y2="634"/>
</g>
<polygon points="152.7,309.3 163.7,300.3 178.3,309.3 170.6,336.2" fill="none" stroke="#000" stroke-width="5.6" stroke-linejoin="round" shape-rendering="auto"/>
<path d="M170.6 336.2 L171.9 350.4" stroke="#000" stroke-width="6" fill="none" stroke-linecap="round" stroke-linejoin="round" shape-rendering="auto"/>
<path d="M145.7 354.2 L171.9 350.4 L202.2 358.8" stroke="#000" stroke-width="6" fill="none" stroke-linecap="round" stroke-linejoin="round" shape-rendering="auto"/>
<path d="M145.7 354.2 L136.7 392.2 L121.8 427.4 L112.8 445.4" stroke="#000" stroke-width="6" fill="none" stroke-linecap="round" stroke-linejoin="round" shape-rendering="auto"/>
<path d="M202.2 358.8 L220.7 395.3" stroke="#000" stroke-width="6" fill="none" stroke-linecap="round" stroke-linejoin="round" shape-rendering="auto"/>
<path d="M145.7 354.2 L172.7 410.7 L198.7 451.6" stroke="#000" stroke-width="6" fill="none" stroke-linecap="round" stroke-linejoin="round" shape-rendering="auto"/>
<path d="M202.2 358.8 L172.7 410.7 L155.3 444" stroke="#000" stroke-width="6" fill="none" stroke-linecap="round" stroke-linejoin="round" shape-rendering="auto"/>
<path d="M155.3 444 L198.7 451.6" stroke="#000" stroke-width="6" fill="none" stroke-linecap="round" stroke-linejoin="round" shape-rendering="auto"/>
<path d="M155.3 444 L151.8 505.8 L151.9 566.9 L153.7 577.7 L122.8 591.8" stroke="#000" stroke-width="6" fill="none" stroke-linecap="round" stroke-linejoin="round" shape-rendering="auto"/>
<path d="M198.7 451.6 L200.3 508.6 L226.3 520 L228.2 555.9" stroke="#000" stroke-width="6" fill="none" stroke-linecap="round" stroke-linejoin="round" shape-rendering="auto"/>
<path d="M219.6 436.4 L216.6 458.6" stroke="#000" stroke-width="6" fill="none" stroke-linecap="round" stroke-linejoin="round" shape-rendering="auto"/>
<path d="M220.7 395.3 L219.6 436.4" stroke="#006000" stroke-width="6" fill="none" stroke-linecap="round" stroke-linejoin="round" shape-rendering="auto"/>
<circle cx="170.6" cy="336.2" r="6.2" fill="#fff" stroke="#000" stroke-width="1.2" shape-rendering="auto"/>
<circle cx="171.9" cy="350.4" r="6.2" fill="#fff" stroke="#000" stroke-width="1.2" shape-rendering="auto"/>
<circle cx="145.7" cy="354.2" r="6.2" fill="#fff" stroke="#000" stroke-width="1.2" shape-rendering="auto"/>
<circle cx="136.7" cy="392.2" r="6.2" fill="#fff" stroke="#000" stroke-width="1.2" shape-rendering="auto"/>
<circle cx="121.8" cy="427.4" r="6.2" fill="#fff" stroke="#000" stroke-width="1.2" shape-rendering="auto"/>
<circle cx="172.7" cy="410.7" r="6.2" fill="#fff" stroke="#000" stroke-width="1.2" shape-rendering="auto"/>
<circle cx="155.3" cy="444" r="6.2" fill="#fff" stroke="#000" stroke-width="1.2" shape-rendering="auto"/>
<circle cx="198.7" cy="451.6" r="6.2" fill="#fff" stroke="#000" stroke-width="1.2" shape-rendering="auto"/>
<circle cx="151.8" cy="505.8" r="6.2" fill="#fff" stroke="#000" stroke-width="1.2" shape-rendering="auto"/>
<circle cx="151.9" cy="566.9" r="6.2" fill="#fff" stroke="#000" stroke-width="1.2" shape-rendering="auto"/>
<circle cx="200.3" cy="508.6" r="6.2" fill="#fff" stroke="#000" stroke-width="1.2" shape-rendering="auto"/>
<circle cx="226.3" cy="520" r="6.2" fill="#fff" stroke="#000" stroke-width="1.2" shape-rendering="auto"/>
<circle cx="219.6" cy="436.4" r="6.2" fill="#fff" stroke="#000" stroke-width="1.2" shape-rendering="auto"/>
<circle cx="202.2" cy="358.8" r="6.2" fill="#fff" stroke="#000" stroke-width="1.2" shape-rendering="auto"/>
<circle cx="175.6" cy="435.8" r="5.5" fill="#fff" stroke="#000" stroke-width="1.2" shape-rendering="auto"/>
<circle cx="220.7" cy="395.3" r="6.2" fill="#00a000" stroke="#000" stroke-width="1.2" shape-rendering="auto"/>
<path d="M171.25 343.29999999999995 L171.9 350.4" stroke="#000" stroke-width="6" stroke-linecap="round" fill="none" shape-rendering="auto"/>
<path d="M211.45 377.05 L220.7 395.3" stroke="#000" stroke-width="6" stroke-linecap="round" fill="none" shape-rendering="auto"/>
<path d="M158.8 352.29999999999995 L171.9 350.4" stroke="#000" stroke-width="6" stroke-linecap="round" fill="none" shape-rendering="auto"/>
<path d="M187.05 354.6 L171.9 350.4" stroke="#000" stroke-width="6" stroke-linecap="round" fill="none" shape-rendering="auto"/>
<path d="M158.8 352.29999999999995 L145.7 354.2" stroke="#000" stroke-width="6" stroke-linecap="round" fill="none" shape-rendering="auto"/>
<path d="M141.2 373.2 L136.7 392.2" stroke="#000" stroke-width="6" stroke-linecap="round" fill="none" shape-rendering="auto"/>
<path d="M129.25 409.79999999999995 L121.8 427.4" stroke="#000" stroke-width="6" stroke-linecap="round" fill="none" shape-rendering="auto"/>
<path d="M159.2 382.45 L172.7 410.7" stroke="#000" stroke-width="6" stroke-linecap="round" fill="none" shape-rendering="auto"/>
<path d="M164.0 427.35 L155.3 444" stroke="#000" stroke-width="6" stroke-linecap="round" fill="none" shape-rendering="auto"/>
<path d="M153.55 474.9 L151.8 505.8" stroke="#000" stroke-width="6" stroke-linecap="round" fill="none" shape-rendering="auto"/>
<path d="M151.85000000000002 536.35 L151.9 566.9" stroke="#000" stroke-width="6" stroke-linecap="round" fill="none" shape-rendering="auto"/>
<path d="M199.5 480.1 L200.3 508.6" stroke="#000" stroke-width="6" stroke-linecap="round" fill="none" shape-rendering="auto"/>
<path d="M213.3 514.3 L226.3 520" stroke="#000" stroke-width="6" stroke-linecap="round" fill="none" shape-rendering="auto"/>
<path d="M185.7 431.15 L198.7 451.6" stroke="#000" stroke-width="6" stroke-linecap="round" fill="none" shape-rendering="auto"/>
<path d="M218.1 447.5 L216.6 458.6" stroke="#000" stroke-width="6" stroke-linecap="round" fill="none" shape-rendering="auto"/>
<path d="M220.14999999999998 415.85 L219.6 436.4" stroke="#006000" stroke-width="6" stroke-linecap="round" fill="none" shape-rendering="auto"/>
<path d="M161.6 322.7 L170.6 336.2 L174.4 322.7" stroke="#000" stroke-width="5.6" fill="none" stroke-linejoin="round" stroke-linecap="round" shape-rendering="auto"/>
</svg>
<rect x="348" y="72" width="178" height="343" fill="#c0c0c0"/>
<rect x="349" y="73" width="175" height="1" fill="#ffffff"/>
<rect x="349" y="73" width="1" height="340" fill="#ffffff"/>
<rect x="348" y="414" width="178" height="1" fill="#000000"/>
<rect x="525" y="72" width="1" height="343" fill="#000000"/>
<rect x="349" y="413" width="176" height="1" fill="#808080"/>
<rect x="524" y="73" width="1" height="341" fill="#808080"/>
<rect x="352" y="76" width="170" height="18" fill="#808080"/>
<g transform="translate(354,78) scale(1.0)" shape-rendering="auto"><path d="M7.4 3.2 L3.6 11.2" stroke="#000" stroke-width="2.2" fill="none"/><rect x="3.2" y="10" width="8.6" height="2.6" fill="#000"/><path d="M8.6 3.6 L13.6 11.2" stroke="#006000" stroke-width="1.9" fill="none"/><rect x="5.8" y="0.6" width="5" height="4.6" fill="#000"/><circle cx="8.3" cy="2.9" r="1.5" fill="none" stroke="#00d000" stroke-width="1.2"/><circle cx="2.2" cy="11.3" r="1.6" fill="#fff" stroke="#004000" stroke-width="0.8" stroke-dasharray="1 1"/><circle cx="13.8" cy="11.3" r="1.6" fill="#fff" stroke="#004000" stroke-width="0.8" stroke-dasharray="1 1"/></g>
<text x="372" y="88.5" font-size="12" fill="#c0c0c0" font-family="Liberation Sans" font-weight="bold" textLength="73" lengthAdjust="spacingAndGlyphs" filter="url(#crisp)">WALK.APE:4</text>
<rect x="504" y="78" width="16" height="14" fill="#c0c0c0"/>
<rect x="504" y="78" width="15" height="1" fill="#ffffff"/>
<rect x="504" y="78" width="1" height="13" fill="#ffffff"/>
<rect x="504" y="91" width="16" height="1" fill="#000000"/>
<rect x="519" y="78" width="1" height="14" fill="#000000"/>
<rect x="505" y="90" width="14" height="1" fill="#808080"/>
<rect x="518" y="79" width="1" height="12" fill="#808080"/>
<rect x="508" y="81" width="1" height="1" fill="#000000"/>
<rect x="509" y="81" width="1" height="1" fill="#000000"/>
<rect x="514" y="81" width="1" height="1" fill="#000000"/>
<rect x="515" y="81" width="1" height="1" fill="#000000"/>
<rect x="509" y="82" width="1" height="1" fill="#000000"/>
<rect x="510" y="82" width="1" height="1" fill="#000000"/>
<rect x="513" y="82" width="1" height="1" fill="#000000"/>
<rect x="514" y="82" width="1" height="1" fill="#000000"/>
<rect x="510" y="83" width="1" height="1" fill="#000000"/>
<rect x="511" y="83" width="1" height="1" fill="#000000"/>
<rect x="512" y="83" width="1" height="1" fill="#000000"/>
<rect x="513" y="83" width="1" height="1" fill="#000000"/>
<rect x="511" y="84" width="1" height="1" fill="#000000"/>
<rect x="512" y="84" width="1" height="1" fill="#000000"/>
<rect x="510" y="85" width="1" height="1" fill="#000000"/>
<rect x="511" y="85" width="1" height="1" fill="#000000"/>
<rect x="512" y="85" width="1" height="1" fill="#000000"/>
<rect x="513" y="85" width="1" height="1" fill="#000000"/>
<rect x="509" y="86" width="1" height="1" fill="#000000"/>
<rect x="510" y="86" width="1" height="1" fill="#000000"/>
<rect x="513" y="86" width="1" height="1" fill="#000000"/>
<rect x="514" y="86" width="1" height="1" fill="#000000"/>
<rect x="508" y="87" width="1" height="1" fill="#000000"/>
<rect x="509" y="87" width="1" height="1" fill="#000000"/>
<rect x="514" y="87" width="1" height="1" fill="#000000"/>
<rect x="515" y="87" width="1" height="1" fill="#000000"/>
<rect x="352" y="94" width="170" height="317" fill="#ffffff"/>
<g shape-rendering="crispEdges" stroke-linejoin="miter">
<path d="M419 157 L426 168 L431 180" stroke="#00c000" stroke-width="1" fill="none"/>
<path d="M416.8 187.6 L434.5 188 L448 196.7 L466 228" stroke="#00c000" stroke-width="1" fill="none"/>
<path d="M420.8 198 L428.3 230.3" stroke="#00c000" stroke-width="1" fill="none"/>
<path d="M448 197 L438.5 229" stroke="#00c000" stroke-width="1" fill="none"/>
<path d="M407.6 218.6 L398.6 237.9" stroke="#00c000" stroke-width="1" fill="none"/>
<path d="M423.5 257.3 L419.9 318.9" stroke="#00c000" stroke-width="1" fill="none"/>
<path d="M396.3 357 L419 347.9" stroke="#00c000" stroke-width="1" fill="none"/>
<path d="M452.5 271.8 L455.2 302.6 L481.5 308" stroke="#00c000" stroke-width="1" fill="none"/>
<path d="M483.7 332.5 L486 318" stroke="#00c000" stroke-width="1" fill="none"/>
<path d="M469 236 L474 262" stroke="#00c000" stroke-width="1" fill="none"/>
<path d="M422.2 145.4 L415 148.6 L411.8 160 L416.8 178 L424.5 179 L432.2 177.2 L439.9 176.3 L442.6 161.8 L439.4 154 L434.5 150.9 L422.2 145.4" stroke="#ff0000" stroke-width="1" fill="none"/>
<path d="M419.5 146.8 L418.6 155.9 L430 150 L434.5 150.9" stroke="#ff0000" stroke-width="1" fill="none"/>
<path d="M411.8 160 L424 163.6 L442.6 161.8" stroke="#ff0000" stroke-width="1" fill="none"/>
<path d="M418.6 155.9 L426 160 L433 168 L439.9 176.3" stroke="#ff0000" stroke-width="1" fill="none"/>
<path d="M430 150 L428 160 L434 162 L434 166 L428 176 L424.5 179" stroke="#ff0000" stroke-width="1" fill="none"/>
<path d="M425 162 L421 172 L425 178" stroke="#ff0000" stroke-width="1" fill="none"/>
<path d="M413.6 179.4 L424.5 179 L437.2 182.6 L458 195.3" stroke="#ff0000" stroke-width="1" fill="none"/>
<path d="M413.6 179.4 L409 184.9 L407.7 189.4 L405.4 199.8" stroke="#ff0000" stroke-width="1" fill="none"/>
<path d="M416.3 187.1 L423.6 185.3 L434.5 187.1 L440.3 189.4 L448 196.2" stroke="#ff0000" stroke-width="1" fill="none"/>
<path d="M409 184.9 L416.3 187.1 L412.7 197.7" stroke="#ff0000" stroke-width="1" fill="none"/>
<path d="M423.6 185.3 L420.8 197.7" stroke="#ff0000" stroke-width="1" fill="none"/>
<path d="M434.5 187.1 L431 196" stroke="#ff0000" stroke-width="1" fill="none"/>
<path d="M412.7 197.7 L420.8 197.7 L428.3 197.7 L448 196.3 L458.2 195.6" stroke="#ff0000" stroke-width="1" fill="none"/>
<path d="M420.8 197.7 L428.3 230.3" stroke="#ff0000" stroke-width="1" fill="none"/>
<path d="M428.3 197.7 L438.5 229" stroke="#ff0000" stroke-width="1" fill="none"/>
<path d="M448 196.3 L430.3 230.3" stroke="#ff0000" stroke-width="1" fill="none"/>
<path d="M448 197 L460.3 230.3" stroke="#ff0000" stroke-width="1" fill="none"/>
<path d="M412.7 197.7 L416.8 219.4" stroke="#ff0000" stroke-width="1" fill="none"/>
<path d="M416.8 219.4 L397.7 258.8" stroke="#ff0000" stroke-width="1" fill="none"/>
<path d="M458.2 195.6 L460.3 205.8 L475.2 227.6" stroke="#ff0000" stroke-width="1" fill="none"/>
<path d="M430 230 L437 230 L441 234 L441 240 L437 244 L430 244 L426 240 L426 234 L430 230" stroke="#ff0000" stroke-width="1" fill="none"/>
<path d="M429 242.5 L417.4 250.7" stroke="#ff0000" stroke-width="1" fill="none"/>
<path d="M438.5 242.5 L457.5 261.6" stroke="#ff0000" stroke-width="1" fill="none"/>
<path d="M460.3 230.3 L461.6 237 L458.9 261.6" stroke="#ff0000" stroke-width="1" fill="none"/>
<path d="M417.4 250.7 L418 256 L430.8 260.9 L447 273.6 L456.1 264.5 L457.5 261.6" stroke="#ff0000" stroke-width="1" fill="none"/>
<path d="M422.6 260.9 L438 250 L447 262" stroke="#ff0000" stroke-width="1" fill="none"/>
<path d="M406.4 195 L401 214.3 L387.7 240.9 L380.4 254.8 L382.9 264.4 L393.7 262 L402.2 249.3 L416.7 218" stroke="#ff0000" stroke-width="1" fill="none"/>
<path d="M401 214.3 L411.2 208.9 L416.7 218 L407 224 L401 214.3" stroke="#ff0000" stroke-width="1" fill="none"/>
<path d="M387.7 240.3 L399.2 237.9 L402.2 249.3 L391.9 251.2 L387.7 240.3" stroke="#ff0000" stroke-width="1" fill="none"/>
<path d="M407 224 L391.9 251.2" stroke="#ff0000" stroke-width="1" fill="none"/>
<path d="M388.3 257.8 L399.2 237.9" stroke="#ff0000" stroke-width="1" fill="none"/>
<path d="M458.2 195.6 L468 198 L476.6 227.6 L477.9 237 L475.2 264.5 L468.8 256.3 L459.8 261.8 L461.6 283.5 L472.4 277.2 L475.2 264.5" stroke="#ff0000" stroke-width="1" fill="none"/>
<path d="M466 228 L476.6 227.6 L470 240 L461.6 237 L466 228" stroke="#ff0000" stroke-width="1" fill="none"/>
<path d="M470 240 L468.8 256.3" stroke="#ff0000" stroke-width="1" fill="none"/>
<path d="M461.6 237 L459.8 261.8" stroke="#ff0000" stroke-width="1" fill="none"/>
<path d="M418 250 L412.6 295.3 L411.7 340.6 L392.7 349.7 L388.2 359.7 L398.1 365.1 L429 347.9 L428 344.3 L429 300.8 L430.8 260.9" stroke="#ff0000" stroke-width="1" fill="none"/>
<path d="M419.9 292.6 L428 299 L419.9 305.3 L412.6 298 L419.9 292.6" stroke="#ff0000" stroke-width="1" fill="none"/>
<path d="M419 333.4 L428 342.4 L419 348.8 L411.7 340.6 L419 333.4" stroke="#ff0000" stroke-width="1" fill="none"/>
<path d="M411.7 341.5 L419 348.8 L421 355" stroke="#ff0000" stroke-width="1" fill="none"/>
<path d="M445.3 273.6 L448 308 L459.8 315.3 L483.3 318 L476 333.4 L481.5 341.5 L492.4 335.2 L495.1 308 L488.8 302.6 L456.1 299.8 L456.1 264.5" stroke="#ff0000" stroke-width="1" fill="none"/>
<path d="M448 308 L456.1 302.6 L460.7 311.6" stroke="#ff0000" stroke-width="1" fill="none"/>
<path d="M483.3 318 L488.8 303.5 L492 312 L483.3 318" stroke="#ff0000" stroke-width="1" fill="none"/>
<path d="M418 256 L419.9 292.6" stroke="#ff0000" stroke-width="1" fill="none"/>
<path d="M419.9 305.3 L419 333.4" stroke="#ff0000" stroke-width="1" fill="none"/>
<path d="M452 266 L452 305" stroke="#ff0000" stroke-width="1" fill="none"/>
<path d="M445.3 273.6 L456.1 264.5" stroke="#ff0000" stroke-width="1" fill="none"/>
<path d="M410 200 L404 222 L395 244 L387 257" stroke="#ff0000" stroke-width="1" fill="none"/>
<path d="M412.7 197.7 L430 230" stroke="#ff0000" stroke-width="1" fill="none"/>
<path d="M458 196 L441 234" stroke="#ff0000" stroke-width="1" fill="none"/>
<path d="M462 205 L470 235 L470 258" stroke="#ff0000" stroke-width="1" fill="none"/>
<path d="M426 240 L424 256" stroke="#ff0000" stroke-width="1" fill="none"/>
<path d="M441 240 L447 262" stroke="#ff0000" stroke-width="1" fill="none"/>
</g>
<rect x="526" y="71" width="362" height="567" fill="#c0c0c0"/>
<rect x="527" y="72" width="359" height="1" fill="#ffffff"/>
<rect x="527" y="72" width="1" height="564" fill="#ffffff"/>
<rect x="526" y="637" width="362" height="1" fill="#000000"/>
<rect x="887" y="71" width="1" height="567" fill="#000000"/>
<rect x="527" y="636" width="360" height="1" fill="#808080"/>
<rect x="886" y="72" width="1" height="565" fill="#808080"/>
<rect x="530" y="75" width="354" height="18" fill="#808080"/>
<g transform="translate(532,77) scale(1.0)" shape-rendering="auto"><path d="M7.4 3.2 L3.6 11.2" stroke="#000" stroke-width="2.2" fill="none"/><rect x="3.2" y="10" width="8.6" height="2.6" fill="#000"/><path d="M8.6 3.6 L13.6 11.2" stroke="#006000" stroke-width="1.9" fill="none"/><rect x="5.8" y="0.6" width="5" height="4.6" fill="#000"/><circle cx="8.3" cy="2.9" r="1.5" fill="none" stroke="#00d000" stroke-width="1.2"/><circle cx="2.2" cy="11.3" r="1.6" fill="#fff" stroke="#004000" stroke-width="0.8" stroke-dasharray="1 1"/><circle cx="13.8" cy="11.3" r="1.6" fill="#fff" stroke="#004000" stroke-width="0.8" stroke-dasharray="1 1"/></g>
<text x="550" y="87.5" font-size="12" fill="#c0c0c0" font-family="Liberation Sans" font-weight="bold" textLength="73" lengthAdjust="spacingAndGlyphs" filter="url(#crisp)">WALK.APE:3</text>
<rect x="866" y="77" width="16" height="14" fill="#c0c0c0"/>
<rect x="866" y="77" width="15" height="1" fill="#ffffff"/>
<rect x="866" y="77" width="1" height="13" fill="#ffffff"/>
<rect x="866" y="90" width="16" height="1" fill="#000000"/>
<rect x="881" y="77" width="1" height="14" fill="#000000"/>
<rect x="867" y="89" width="14" height="1" fill="#808080"/>
<rect x="880" y="78" width="1" height="12" fill="#808080"/>
<rect x="870" y="80" width="1" height="1" fill="#000000"/>
<rect x="871" y="80" width="1" height="1" fill="#000000"/>
<rect x="876" y="80" width="1" height="1" fill="#000000"/>
<rect x="877" y="80" width="1" height="1" fill="#000000"/>
<rect x="871" y="81" width="1" height="1" fill="#000000"/>
<rect x="872" y="81" width="1" height="1" fill="#000000"/>
<rect x="875" y="81" width="1" height="1" fill="#000000"/>
<rect x="876" y="81" width="1" height="1" fill="#000000"/>
<rect x="872" y="82" width="1" height="1" fill="#000000"/>
<rect x="873" y="82" width="1" height="1" fill="#000000"/>
<rect x="874" y="82" width="1" height="1" fill="#000000"/>
<rect x="875" y="82" width="1" height="1" fill="#000000"/>
<rect x="873" y="83" width="1" height="1" fill="#000000"/>
<rect x="874" y="83" width="1" height="1" fill="#000000"/>
<rect x="872" y="84" width="1" height="1" fill="#000000"/>
<rect x="873" y="84" width="1" height="1" fill="#000000"/>
<rect x="874" y="84" width="1" height="1" fill="#000000"/>
<rect x="875" y="84" width="1" height="1" fill="#000000"/>
<rect x="871" y="85" width="1" height="1" fill="#000000"/>
<rect x="872" y="85" width="1" height="1" fill="#000000"/>
<rect x="875" y="85" width="1" height="1" fill="#000000"/>
<rect x="876" y="85" width="1" height="1" fill="#000000"/>
<rect x="870" y="86" width="1" height="1" fill="#000000"/>
<rect x="871" y="86" width="1" height="1" fill="#000000"/>
<rect x="876" y="86" width="1" height="1" fill="#000000"/>
<rect x="877" y="86" width="1" height="1" fill="#000000"/>
<rect x="530" y="93" width="354" height="541" fill="#ffffff"/>
<defs><pattern id="hatd" width="14" height="4.6" patternUnits="userSpaceOnUse" patternTransform="rotate(-36)"><path d="M0 2.3 Q3.5 0.9 7 2.3 T14 2.3" stroke="#000" stroke-width="1.4" fill="none"/><path d="M1 4.1 L4 3.8 M8 4.3 L11 3.9" stroke="#000" stroke-width="0.9" fill="none"/></pattern><pattern id="hats" width="20" height="6" patternUnits="userSpaceOnUse" patternTransform="rotate(-52)"><path d="M0 3 Q5 2.2 10 3 T20 3" stroke="#000" stroke-width="1.05" fill="none" stroke-dasharray="15 5"/></pattern></defs>
<g shape-rendering="auto">
<polygon points="666.5,365 689.7,380 681.4,529.4 684.8,536 681.4,559.3 643.2,579.2 630,569.3 631.6,559.3 666.5,542.7 661.5,459.7" fill="#fff"/>
<polygon points="666.5,365 689.7,380 681.4,529.4 684.8,536 681.4,559.3 643.2,579.2 630,569.3 631.6,559.3 666.5,542.7 661.5,459.7" fill="url(#hats)" stroke="#000" stroke-width="3.2" stroke-linejoin="round"/>
<polygon points="734.6,391.6 747.9,386.6 746.2,454.7 786,463 792.7,469.6 787.7,517.8 779.4,526.1 771.1,521.1 776.1,481.3 733,468" fill="#fff"/>
<polygon points="734.6,391.6 747.9,386.6 746.2,454.7 786,463 792.7,469.6 787.7,517.8 779.4,526.1 771.1,521.1 776.1,481.3 733,468" fill="url(#hats)" stroke="#000" stroke-width="3.2" stroke-linejoin="round"/>
<polygon points="659.2,245.6 668.4,272 667.1,303.7 665.8,309 639.4,356.6 631.4,379 618.2,384.3 612.9,369.8 642,306.4 640.7,301" fill="#fff"/>
<polygon points="659.2,245.6 668.4,272 667.1,303.7 665.8,309 639.4,356.6 631.4,379 618.2,384.3 612.9,369.8 642,306.4 640.7,301" fill="url(#hats)" stroke="#000" stroke-width="3" stroke-linejoin="round"/>
<polygon points="747.7,250.9 758.3,274.6 776.8,309 779.4,314.3 778.1,346 774.1,393.6 768.8,400.2 756.2,403.2 751.7,393.6 755.6,351.3 757,311.6 742.4,269.4" fill="#fff"/>
<polygon points="747.7,250.9 758.3,274.6 776.8,309 779.4,314.3 778.1,346 774.1,393.6 768.8,400.2 756.2,403.2 751.7,393.6 755.6,351.3 757,311.6 742.4,269.4" fill="url(#hats)" stroke="#000" stroke-width="3" stroke-linejoin="round"/>
<polygon points="696.2,331.5 710.7,328.8 726.6,351.3 747.7,388.3 734.6,391.6 689.7,380 669.7,365" fill="#fff"/>
<polygon points="696.2,331.5 710.7,328.8 726.6,351.3 747.7,388.3 734.6,391.6 689.7,380 669.7,365" fill="url(#hatd)" stroke="#000" stroke-width="2.8" stroke-linejoin="round"/>
<polygon points="659.2,245.6 692.2,242.9 710.7,245.6 747.7,250.9 742.4,269.4 710.7,327.5 694.9,330.1 668.4,272" fill="#fff"/>
<polygon points="659.2,245.6 692.2,242.9 710.7,245.6 747.7,250.9 742.4,269.4 710.7,327.5 694.9,330.1 668.4,272" fill="url(#hatd)" stroke="#000" stroke-width="2.8" stroke-linejoin="round"/>
<polygon points="669.5,184 687.6,176.6 704,181 715,187 716,198 712,220 709,232 710,243 695,243 690.6,231 677,210 672.5,198" fill="#fff"/>
<polygon points="669.5,184 687.6,176.6 704,181 715,187 716,198 712,220 709,232 710,243 695,243 690.6,231 677,210 672.5,198" fill="url(#hatd)" stroke="#000" stroke-width="3" stroke-linejoin="round"/>
</g>
<rect x="348" y="414" width="177" height="223" fill="#000000"/>
<rect x="349" y="415" width="175" height="221" fill="#c0c0c0"/>
<rect x="349" y="415" width="175" height="18" fill="#808080"/>
<g transform="translate(351,417) scale(1.0)" shape-rendering="auto"><path d="M7.4 3.2 L3.6 11.2" stroke="#000" stroke-width="2.2" fill="none"/><rect x="3.2" y="10" width="8.6" height="2.6" fill="#000"/><path d="M8.6 3.6 L13.6 11.2" stroke="#006000" stroke-width="1.9" fill="none"/><rect x="5.8" y="0.6" width="5" height="4.6" fill="#000"/><circle cx="8.3" cy="2.9" r="1.5" fill="none" stroke="#00d000" stroke-width="1.2"/><circle cx="2.2" cy="11.3" r="1.6" fill="#fff" stroke="#004000" stroke-width="0.8" stroke-dasharray="1 1"/><circle cx="13.8" cy="11.3" r="1.6" fill="#fff" stroke="#004000" stroke-width="0.8" stroke-dasharray="1 1"/></g>
<text x="369" y="427.5" font-size="12" fill="#c0c0c0" font-family="Liberation Sans" font-weight="bold" textLength="73" lengthAdjust="spacingAndGlyphs" filter="url(#crisp)">WALK.APE:2</text>
<rect x="506" y="417" width="16" height="14" fill="#c0c0c0"/>
<rect x="506" y="417" width="15" height="1" fill="#ffffff"/>
<rect x="506" y="417" width="1" height="13" fill="#ffffff"/>
<rect x="506" y="430" width="16" height="1" fill="#000000"/>
<rect x="521" y="417" width="1" height="14" fill="#000000"/>
<rect x="507" y="429" width="14" height="1" fill="#808080"/>
<rect x="520" y="418" width="1" height="12" fill="#808080"/>
<rect x="510" y="420" width="1" height="1" fill="#000000"/>
<rect x="511" y="420" width="1" height="1" fill="#000000"/>
<rect x="516" y="420" width="1" height="1" fill="#000000"/>
<rect x="517" y="420" width="1" height="1" fill="#000000"/>
<rect x="511" y="421" width="1" height="1" fill="#000000"/>
<rect x="512" y="421" width="1" height="1" fill="#000000"/>
<rect x="515" y="421" width="1" height="1" fill="#000000"/>
<rect x="516" y="421" width="1" height="1" fill="#000000"/>
<rect x="512" y="422" width="1" height="1" fill="#000000"/>
<rect x="513" y="422" width="1" height="1" fill="#000000"/>
<rect x="514" y="422" width="1" height="1" fill="#000000"/>
<rect x="515" y="422" width="1" height="1" fill="#000000"/>
<rect x="513" y="423" width="1" height="1" fill="#000000"/>
<rect x="514" y="423" width="1" height="1" fill="#000000"/>
<rect x="512" y="424" width="1" height="1" fill="#000000"/>
<rect x="513" y="424" width="1" height="1" fill="#000000"/>
<rect x="514" y="424" width="1" height="1" fill="#000000"/>
<rect x="515" y="424" width="1" height="1" fill="#000000"/>
<rect x="511" y="425" width="1" height="1" fill="#000000"/>
<rect x="512" y="425" width="1" height="1" fill="#000000"/>
<rect x="515" y="425" width="1" height="1" fill="#000000"/>
<rect x="516" y="425" width="1" height="1" fill="#000000"/>
<rect x="510" y="426" width="1" height="1" fill="#000000"/>
<rect x="511" y="426" width="1" height="1" fill="#000000"/>
<rect x="516" y="426" width="1" height="1" fill="#000000"/>
<rect x="517" y="426" width="1" height="1" fill="#000000"/>
<rect x="349" y="433" width="175" height="1" fill="#000000"/>
<text x="356" y="457.5" font-size="12" fill="#000000" font-family="Liberation Sans" font-weight="bold" textLength="30" lengthAdjust="spacingAndGlyphs" filter="url(#crisp)">Joint:</text>
<rect x="356" y="459" width="7" height="1" fill="#000000"/>
<rect x="395" y="441" width="118" height="1" fill="#808080"/>
<rect x="395" y="441" width="1" height="22" fill="#808080"/>
<rect x="396" y="442" width="117" height="1" fill="#000000"/>
<rect x="396" y="442" width="1" height="21" fill="#000000"/>
<rect x="396" y="462" width="117" height="1" fill="#000000"/>
<rect x="512" y="442" width="1" height="21" fill="#000000"/>
<rect x="395" y="463" width="119" height="1" fill="#ffffff"/>
<rect x="513" y="441" width="1" height="23" fill="#ffffff"/>
<rect x="397" y="443" width="115" height="19" fill="#ffffff"/>
<text x="401" y="456.5" font-size="12" fill="#000000" font-family="Liberation Sans" font-weight="bold" textLength="55" lengthAdjust="spacingAndGlyphs" filter="url(#crisp)">LeftElbow</text>
<rect x="498" y="443" width="14" height="19" fill="#c0c0c0"/>
<rect x="498" y="443" width="12" height="1" fill="#ffffff"/>
<rect x="498" y="443" width="1" height="17" fill="#ffffff"/>
<rect x="498" y="460" width="13" height="1" fill="#000000"/>
<rect x="510" y="443" width="1" height="18" fill="#000000"/>
<rect x="499" y="459" width="11" height="1" fill="#808080"/>
<rect x="509" y="444" width="1" height="16" fill="#808080"/>
<rect x="497" y="461" width="15" height="1" fill="#c0c0c0"/>
<rect x="511" y="443" width="1" height="19" fill="#c0c0c0"/>
<rect x="497" y="443" width="1" height="19" fill="#000000"/>
<polygon points="501.5,450.5 507.5,450.5 504.5,454" fill="#000" shape-rendering="auto"/>
<rect x="356" y="470" width="158" height="1" fill="#808080"/>
<rect x="356" y="470" width="1" height="129" fill="#808080"/>
<rect x="356" y="599" width="159" height="1" fill="#ffffff"/>
<rect x="514" y="470" width="1" height="130" fill="#ffffff"/>
<text x="367" y="494.5" font-size="12" fill="#000000" font-family="Liberation Sans" font-weight="bold" textLength="43" lengthAdjust="spacingAndGlyphs" filter="url(#crisp)">Flexion:</text>
<rect x="367" y="496" width="7" height="1" fill="#000000"/>
<rect x="420" y="480" width="38" height="1" fill="#808080"/>
<rect x="420" y="480" width="1" height="22" fill="#808080"/>
<rect x="421" y="481" width="36" height="1" fill="#000000"/>
<rect x="421" y="481" width="1" height="20" fill="#000000"/>
<rect x="420" y="502" width="39" height="1" fill="#ffffff"/>
<rect x="458" y="480" width="1" height="23" fill="#ffffff"/>
<rect x="421" y="501" width="37" height="1" fill="#c0c0c0"/>
<rect x="457" y="481" width="1" height="21" fill="#c0c0c0"/>
<rect x="422" y="482" width="35" height="19" fill="#ffffff"/>
<text x="424" y="493.5" font-size="12" fill="#000000" font-family="Liberation Sans" font-weight="bold" filter="url(#crisp)">30</text>
<rect x="461" y="480" width="1" height="23" fill="#808080"/>
<rect x="461" y="480" width="11" height="1" fill="#808080"/>
<rect x="462" y="481" width="9" height="21" fill="#000000"/>
<rect x="471" y="480" width="1" height="23" fill="#ffffff"/>
<rect x="461" y="502" width="11" height="1" fill="#ffffff"/>
<rect x="463" y="482" width="7" height="8" fill="#c0c0c0"/>
<rect x="463" y="491" width="7" height="10" fill="#c0c0c0"/>
<rect x="463" y="482" width="6" height="1" fill="#ffffff"/>
<rect x="463" y="482" width="1" height="7" fill="#ffffff"/>
<rect x="463" y="489" width="7" height="1" fill="#808080"/>
<rect x="469" y="482" width="1" height="8" fill="#808080"/>
<rect x="463" y="491" width="6" height="1" fill="#ffffff"/>
<rect x="463" y="491" width="1" height="9" fill="#ffffff"/>
<rect x="463" y="500" width="7" height="1" fill="#808080"/>
<rect x="469" y="491" width="1" height="10" fill="#808080"/>
<polygon points="463.5,488 468.5,488 466,483.5" fill="#000000" shape-rendering="auto"/>
<polygon points="463.5,493 468.5,493 466,497.5" fill="#000000" shape-rendering="auto"/>
<g transform="translate(0,0.0)" shape-rendering="auto">
<path d="M476.5 494.3 H490" stroke="#000" stroke-width="3" fill="none"/>
<path d="M490.6 494.6 L501.2 483.7" stroke="#000" stroke-width="2.4" fill="none" stroke-linecap="round"/>
<path d="M490.6 494.6 L501.2 483.7" stroke="#004000" stroke-width="1.8" fill="none"/>
<circle cx="490.6" cy="494.6" r="2.6" fill="#004000" stroke="#000" stroke-width="1"/>
<circle cx="490.6" cy="494.6" r="1.8" fill="none" stroke="#00d000" stroke-width="1"/>
<path d="M483 482.5 A14.5 14.5 0 0 1 502.1 501.6" stroke="#ffff00" stroke-width="1.1" fill="none"/>
<polygon points="479.9,481.2 484.9,485.9 479.9,485.9" fill="#ffff00"/>
<polygon points="498.9,500.2 503.9,504.9 498.9,504.9" fill="#ffff00"/>
</g>
<text x="368" y="537.5" font-size="12" fill="#ffffff" font-family="Liberation Sans" font-weight="bold" textLength="35" lengthAdjust="spacingAndGlyphs" filter="url(#crisp)">Pivot:</text>
<text x="367" y="536.5" font-size="12" fill="#808080" font-family="Liberation Sans" font-weight="bold" textLength="35" lengthAdjust="spacingAndGlyphs" filter="url(#crisp)">Pivot:</text>
<rect x="367" y="538" width="7" height="1" fill="#808080"/>
<rect x="420" y="522" width="38" height="1" fill="#808080"/>
<rect x="420" y="522" width="1" height="22" fill="#808080"/>
<rect x="421" y="523" width="36" height="1" fill="#000000"/>
<rect x="421" y="523" width="1" height="20" fill="#000000"/>
<rect x="420" y="544" width="39" height="1" fill="#ffffff"/>
<rect x="458" y="522" width="1" height="23" fill="#ffffff"/>
<rect x="421" y="543" width="37" height="1" fill="#c0c0c0"/>
<rect x="457" y="523" width="1" height="21" fill="#c0c0c0"/>
<rect x="422" y="524" width="35" height="19" fill="#ffffff"/>
<rect x="424" y="532" width="3" height="1" fill="#808080"/>
<rect x="428" y="532" width="3" height="1" fill="#808080"/>
<rect x="432" y="532" width="3" height="1" fill="#808080"/>
<rect x="461" y="522" width="1" height="23" fill="#808080"/>
<rect x="461" y="522" width="11" height="1" fill="#808080"/>
<rect x="462" y="523" width="9" height="21" fill="#000000"/>
<rect x="471" y="522" width="1" height="23" fill="#ffffff"/>
<rect x="461" y="544" width="11" height="1" fill="#ffffff"/>
<rect x="463" y="524" width="7" height="8" fill="#c0c0c0"/>
<rect x="463" y="533" width="7" height="10" fill="#c0c0c0"/>
<rect x="463" y="524" width="6" height="1" fill="#ffffff"/>
<rect x="463" y="524" width="1" height="7" fill="#ffffff"/>
<rect x="463" y="531" width="7" height="1" fill="#808080"/>
<rect x="469" y="524" width="1" height="8" fill="#808080"/>
<rect x="463" y="533" width="6" height="1" fill="#ffffff"/>
<rect x="463" y="533" width="1" height="9" fill="#ffffff"/>
<rect x="463" y="542" width="7" height="1" fill="#808080"/>
<rect x="469" y="533" width="1" height="10" fill="#808080"/>
<polygon points="464,530.5 469,530.5 466.5,526" fill="#fff" shape-rendering="auto"/>
<polygon points="463.5,530 468.5,530 466,525.5" fill="#808080" shape-rendering="auto"/>
<polygon points="463.5,535 468.5,535 466,539.5" fill="#808080" shape-rendering="auto"/>
<g transform="translate(0,41.99999999999994)" shape-rendering="auto">
<path d="M476.5 494.3 H490" stroke="#000" stroke-width="3" fill="none"/>
<path d="M490.6 494.6 L501.2 483.7" stroke="#000" stroke-width="2.4" fill="none" stroke-linecap="round"/>
<path d="M490.6 494.6 L501.2 483.7" stroke="#004000" stroke-width="1.8" fill="none"/>
<circle cx="490.6" cy="494.6" r="2.6" fill="#004000" stroke="#000" stroke-width="1"/>
<circle cx="490.6" cy="494.6" r="1.8" fill="none" stroke="#00d000" stroke-width="1"/>
<path d="M492 525.4 Q496.5 526 495.8 532 V538 Q496 541.5 493 541.8" stroke="#ffff00" stroke-width="1.1" fill="none" transform="translate(0,-42)"/>
<polygon points="488.1,526.5 493,525.5 488.1,531" fill="#ffff00" transform="translate(0,-42)"/>
<polygon points="488.1,541.8 494.9,542.2 488.1,546" fill="#ffff00" transform="translate(0,-42)"/>
</g>
<text x="367" y="579.5" font-size="12" fill="#000000" font-family="Liberation Sans" font-weight="bold" textLength="46" lengthAdjust="spacingAndGlyphs" filter="url(#crisp)">Torsion:</text>
<rect x="367" y="581" width="7" height="1" fill="#000000"/>
<rect x="420" y="565" width="38" height="1" fill="#808080"/>
<rect x="420" y="565" width="1" height="22" fill="#808080"/>
<rect x="421" y="566" width="36" height="1" fill="#000000"/>
<rect x="421" y="566" width="1" height="20" fill="#000000"/>
<rect x="420" y="587" width="39" height="1" fill="#ffffff"/>
<rect x="458" y="565" width="1" height="23" fill="#ffffff"/>
<rect x="421" y="586" width="37" height="1" fill="#c0c0c0"/>
<rect x="457" y="566" width="1" height="21" fill="#c0c0c0"/>
<rect x="422" y="567" width="35" height="19" fill="#ffffff"/>
<text x="424" y="578.5" font-size="12" fill="#000000" font-family="Liberation Sans" font-weight="bold" filter="url(#crisp)">0</text>
<rect x="461" y="565" width="1" height="23" fill="#808080"/>
<rect x="461" y="565" width="11" height="1" fill="#808080"/>
<rect x="462" y="566" width="9" height="21" fill="#000000"/>
<rect x="471" y="565" width="1" height="23" fill="#ffffff"/>
<rect x="461" y="587" width="11" height="1" fill="#ffffff"/>
<rect x="463" y="567" width="7" height="8" fill="#c0c0c0"/>
<rect x="463" y="576" width="7" height="10" fill="#c0c0c0"/>
<rect x="463" y="567" width="6" height="1" fill="#ffffff"/>
<rect x="463" y="567" width="1" height="7" fill="#ffffff"/>
<rect x="463" y="574" width="7" height="1" fill="#808080"/>
<rect x="469" y="567" width="1" height="8" fill="#808080"/>
<rect x="463" y="576" width="6" height="1" fill="#ffffff"/>
<rect x="463" y="576" width="1" height="9" fill="#ffffff"/>
<rect x="463" y="585" width="7" height="1" fill="#808080"/>
<rect x="469" y="576" width="1" height="10" fill="#808080"/>
<polygon points="463.5,573 468.5,573 466,568.5" fill="#000000" shape-rendering="auto"/>
<polygon points="463.5,578 468.5,578 466,582.5" fill="#000000" shape-rendering="auto"/>
<g transform="translate(0,83.99999999999994)" shape-rendering="auto">
<path d="M476.5 494.3 H490" stroke="#000" stroke-width="3" fill="none"/>
<path d="M490.6 494.6 L501.2 483.7" stroke="#000" stroke-width="2.4" fill="none" stroke-linecap="round"/>
<path d="M490.6 494.6 L501.2 483.7" stroke="#004000" stroke-width="1.8" fill="none"/>
<circle cx="490.6" cy="494.6" r="2.6" fill="#004000" stroke="#000" stroke-width="1"/>
<circle cx="490.6" cy="494.6" r="1.8" fill="none" stroke="#00d000" stroke-width="1"/>
<path d="M489 569 Q489 564 493 564 Q500 565 503.9 573.3 Q505 578 502 580.1 H499.4" stroke="#ffff00" stroke-width="1.1" fill="none" transform="translate(0,-84)"/>
<polygon points="486,571.5 491.9,571.5 491.9,567" fill="#ffff00" transform="translate(0,-84)"/>
<polygon points="497.1,577.4 501.7,577.4 497.1,582.9" fill="#ffff00" transform="translate(0,-84)"/>
</g>
<rect x="356" y="608" width="159" height="20" fill="#000000"/>
<rect x="358" y="610" width="155" height="16" fill="#c0c0c0"/>
<rect x="358" y="610" width="154" height="1" fill="#ffffff"/>
<rect x="358" y="611" width="153" height="1" fill="#ffffff"/>
<rect x="358" y="610" width="1" height="15" fill="#ffffff"/>
<rect x="359" y="610" width="1" height="14" fill="#ffffff"/>
<rect x="359" y="625" width="154" height="1" fill="#808080"/>
<rect x="360" y="624" width="153" height="1" fill="#808080"/>
<rect x="512" y="611" width="1" height="15" fill="#808080"/>
<rect x="511" y="612" width="1" height="14" fill="#808080"/>
<rect x="356" y="608" width="1" height="1" fill="#c0c0c0"/>
<rect x="514" y="608" width="1" height="1" fill="#c0c0c0"/>
<rect x="356" y="627" width="1" height="1" fill="#c0c0c0"/>
<rect x="514" y="627" width="1" height="1" fill="#c0c0c0"/>
<text x="435" y="622.5" font-size="12" fill="#000000" font-family="Liberation Sans" font-weight="bold" textLength="31" lengthAdjust="spacingAndGlyphs" text-anchor="middle" filter="url(#crisp)">Apply</text>
<rect x="4" y="71" width="884" height="1" fill="#000000"/>
</svg>
</body></html>
